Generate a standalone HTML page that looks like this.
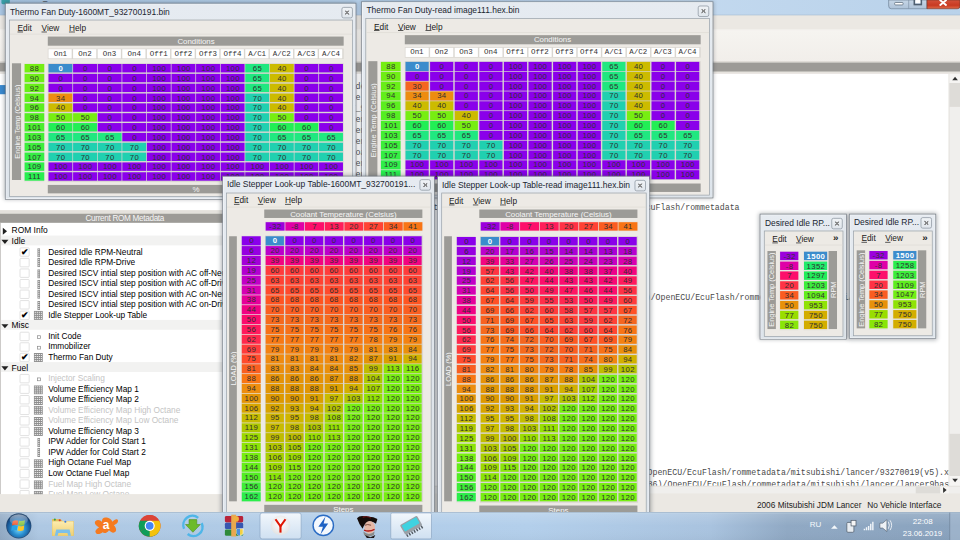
<!DOCTYPE html><html><head><meta charset="utf-8"><style>
*{margin:0;padding:0}
html,body{width:960px;height:540px;overflow:hidden;background:#ebe8e3}
body{font-family:"Liberation Sans",sans-serif}
#root{position:absolute;left:0;top:0;width:1366px;height:768px;transform:scale(0.702782,0.703125);transform-origin:0 0;overflow:hidden;background:#ebe8e3}
#root div{position:absolute}
#main{left:0;top:0;width:1366px;height:728px}
#tb{left:0;top:728px;width:1366px;height:40px}
.t{white-space:nowrap;font-family:"Liberation Sans",sans-serif}
.mono{font-family:"Liberation Mono",monospace}
.win{background:linear-gradient(#e6ebf1,#dde4eb);border:1px solid #747c85;box-sizing:border-box;box-shadow:0 0 6px 1px rgba(20,30,40,.33),inset 0 0 0 1px rgba(255,255,255,.65)}
.cont{background:#edeae5;border:1px solid #96a0aa;box-sizing:border-box;overflow:hidden}
.cbtn{border:1px solid #87919b;border-radius:3px;background:linear-gradient(#f0f3f6,#e0e6ec);box-sizing:border-box}
.cx{left:4px;top:4px;width:6px;height:6px;background:linear-gradient(45deg,transparent 38%,#707070 38% 62%,transparent 62%),linear-gradient(-45deg,transparent 38%,#707070 38% 62%,transparent 62%);opacity:.8}
.gbar{background:#9c9b97;color:#f6f6f6;font-size:11.2px;text-align:center;white-space:nowrap;overflow:hidden}
.vt{transform:translate(-50%,-50%) rotate(-90deg);white-space:nowrap;font-size:10.5px;color:#f6f6f6;line-height:12px}
.c{font-family:"Liberation Sans",sans-serif;font-size:11px;letter-spacing:0.5px;text-indent:0.5px;color:#303030;text-align:center;overflow:hidden}
.hd{font-family:"Liberation Mono",monospace;font-size:10.6px;letter-spacing:0;text-indent:0}
.hd{background:#fff;color:#333}
.sel{background:#3b8ccc;color:#fff;font-weight:bold}
</style></head><body><div id="root"><div id="main">
<div style="left:0.00px;top:0.00px;width:1366.00px;height:22.00px;background:linear-gradient(90deg,#a9c6e3 0%,#b6d0ea 40%,#c3d9ef 70%,#b9d2ea 100%);"></div>
<div class="t" style="left:21px;top:-10px;font-size:11px;color:#222">1600MT_932700191.bin - EcuFlash</div>
<div style="left:2.00px;top:-6.00px;width:12.00px;height:12.00px;background:#3aa0a8;border-radius:2px;"></div>
<svg width="110" height="14" viewBox="0 0 110 14" style="position:absolute;left:1258px;top:0">
<defs><linearGradient id="cbg" x1="0" x2="0" y1="0" y2="1"><stop offset="0" stop-color="#c6d6e6"/><stop offset="1" stop-color="#aec2d8"/></linearGradient>
<linearGradient id="cred" x1="0" x2="0" y1="0" y2="1"><stop offset="0" stop-color="#d4503a"/><stop offset="0.6" stop-color="#c83a22"/><stop offset="1" stop-color="#e06a48"/></linearGradient></defs>
<path d="M6.5 0 L6.5 8.5 Q6.5 12.5 10.5 12.5 L61 12.5 L61 0 Z" fill="url(#cbg)" stroke="#6f8296" stroke-width="1"/>
<line x1="35" y1="0" x2="35" y2="12.5" stroke="#7f92a6" stroke-width="1"/>
<path d="M61 0 L61 12.5 L104 12.5 Q108 12.5 108 8.5 L108 0 Z" fill="url(#cred)" stroke="#7a3a2c" stroke-width="1"/>
<rect x="15" y="3.5" width="12" height="3.5" rx="1.2" fill="#fff" stroke="#4f5f70" stroke-width="1"/>
<rect x="43" y="-1" width="10" height="7.5" fill="none" stroke="#4f5f70" stroke-width="2.2"/>
<rect x="44.5" y="0" width="7" height="4.5" fill="#fff"/>
<path d="M80 0.5 L88 7 M88 0.5 L80 7" stroke="#fff" stroke-width="2.8" stroke-linecap="round"/>
</svg>
<div style="left:0.00px;top:21.00px;width:1366.00px;height:1.00px;background:#9fb2c6;"></div>
<div style="left:0.00px;top:22.00px;width:1366.00px;height:20.00px;background:#ebe8e3;"></div>
<div style="left:0.00px;top:42.00px;width:1366.00px;height:46.00px;background:linear-gradient(#f6f4f0,#f1eeea);border-top:1px solid #f8f7f5;"></div>
<div style="left:0.00px;top:87.00px;width:1366.00px;height:2.00px;background:#dcd9d3;"></div>
<div style="left:0.00px;top:89.00px;width:355.00px;height:210.00px;background:#ffffff;"></div>
<div style="left:0.00px;top:89.00px;width:355.00px;height:13.00px;background:#9d9b97;"></div>
<div style="left:0.00px;top:102.00px;width:355.00px;height:3.00px;background:#e6e3de;"></div>
<div style="left:0.00px;top:120.60px;width:355.00px;height:13.80px;background:#3a8ad0;"></div>
<div style="left:0.00px;top:299.00px;width:355.00px;height:5.00px;background:#e4e1dc;"></div>
<div style="left:0.00px;top:304.00px;width:355.00px;height:13.00px;background:#9d9b97;color:#f6f6f6;font-size:11.6px;letter-spacing:-0.43px;line-height:13px;text-align:center;">Current ROM Metadata</div>
<div style="left:0.00px;top:317.00px;width:355.00px;height:386.00px;background:#ffffff;border-left:1px solid #b8b6b2;border-right:1px solid #b8b6b2;box-sizing:border-box;"></div>
<div style="left:0.00px;top:703.00px;width:355.00px;height:25.00px;background:#ebe8e3;"></div>
<div style="left:355.00px;top:89.00px;width:8.00px;height:639.00px;background:#ebe8e3;border-left:1px solid #c8c5c0;"></div>
<div style="left:322.00px;top:89.00px;width:1044.00px;height:13.00px;background:#9d9b97;"></div>
<div style="left:322.00px;top:102.00px;width:1044.00px;height:3.00px;background:#e6e3de;"></div>
<div style="left:322.00px;top:105.00px;width:1028.00px;height:586.00px;background:#ffffff;"></div>
<div style="left:1350.00px;top:105.00px;width:16.00px;height:586.00px;background:#f0efed;border-left:1px solid #e0ded9;box-sizing:border-box;"></div>
<div style="left:1351.00px;top:105.00px;width:15.00px;height:13.00px;background:#f6f5f3;"><div style="position:absolute;left:4px;top:4px;width:0;height:0;border-left:4px solid transparent;border-right:4px solid transparent;border-bottom:5px solid #303030"></div></div>
<div style="left:1351.00px;top:118.00px;width:15.00px;height:34.00px;background:#dedcd8;"></div>
<div style="left:1351.00px;top:617.00px;width:15.00px;height:60.00px;background:#dedcd8;"></div>
<div style="left:1351.00px;top:677.00px;width:15.00px;height:14.00px;background:#f6f5f3;"><div style="position:absolute;left:4px;top:4px;width:0;height:0;border-left:4px solid transparent;border-right:4px solid transparent;border-top:5px solid #303030"></div></div>
<div style="left:322.00px;top:691.00px;width:1044.00px;height:11.00px;background:#f0efed;border-top:1px solid #e0ded9;box-sizing:border-box;"></div>
<div style="left:1303.00px;top:692.00px;width:35.00px;height:10.00px;background:#dedcd8;"></div>
<div style="left:1338.00px;top:692.00px;width:12.00px;height:10.00px;background:#f6f5f3;"><div style="position:absolute;left:4px;top:1px;width:0;height:0;border-top:4px solid transparent;border-bottom:4px solid transparent;border-left:5px solid #303030"></div></div>
<div style="left:322.00px;top:702.00px;width:1044.00px;height:26.00px;background:#ebe8e3;"></div>
<div class="t" style="left:1077px;top:710.7px;font-size:11.8px;color:#222">2006 Mitsubishi JDM Lancer</div>
<div class="t" style="left:1234px;top:710.7px;font-size:11.8px;color:#222">No Vehicle Interface</div>
</div>
<div style="left:322px;top:105px;width:1028px;height:586px;overflow:hidden">
<div class="t mono" style="left:8.12px;top:-5.57px;font-size:11.725px;line-height:16px;color:#4a4a4a;white-space:pre">Ready.</div>
<div class="t mono" style="left:8.12px;top:10.16px;font-size:11.725px;line-height:16px;color:#4a4a4a;white-space:pre">loading ROM metadata - 1 definition</div>
<div class="t mono" style="left:8.12px;top:25.89px;font-size:11.725px;line-height:16px;color:#4a4a4a;white-space:pre">Idle Stepper Look-up Table: 1 C</div>
<div class="t mono" style="left:8.12px;top:41.62px;font-size:11.725px;line-height:16px;color:#4a4a4a;white-space:pre">Conditions loaded: 1600MT_932700191</div>
<div class="t mono" style="left:8.12px;top:57.35px;font-size:11.725px;line-height:16px;color:#4a4a4a;white-space:pre">C:/Program Files (x86)/OpenECU/EcuFlash/rommetadata/mitsubishi/lancer/93270019.xml</div>
<div class="t mono" style="left:8.12px;top:73.08px;font-size:11.725px;line-height:16px;color:#4a4a4a;white-space:pre">C:/Program Files (x86)/OpenECU/EcuFlash/rommetadata/mitsubishi/lancer/9327.xml</div>
<div class="t mono" style="left:8.12px;top:88.81px;font-size:11.725px;line-height:16px;color:#4a4a4a;white-space:pre">C:/Program Files (x86)/OpenECU/EcuFlash/rommetadata/mitsubishi/lancer/lancer9base.xml</div>
<div class="t mono" style="left:8.12px;top:104.54px;font-size:11.725px;line-height:16px;color:#4a4a4a;white-space:pre">E:/1600MT_932700191.bin loaded</div>
<div class="t mono" style="left:8.12px;top:120.27px;font-size:11.725px;line-height:16px;color:#4a4a4a;white-space:pre">C:/Program Files (x86)/OpenECU/EcuFlash/rommetadata/mitsubishi/evo/evo7base.xml</div>
<div class="t mono" style="left:8.12px;top:136.00px;font-size:11.725px;line-height:16px;color:#4a4a4a;white-space:pre">C:/Program Files (x86)/OpenECU/EcuFlash/rommetadata/mitsubishi/lancer/93270019(v5).xml</div>
<div class="t mono" style="left:8.12px;top:151.72px;font-size:11.725px;line-height:16px;color:#4a4a4a;white-space:pre">Calibration checksum OK</div>
<div class="t mono" style="left:8.12px;top:167.45px;font-size:11.725px;line-height:16px;color:#4a4a4a;white-space:pre">Loading definitions from C:/Program Files (x86)/OpenECU/EcuFlash/rommetadata</div>
<div class="t mono" style="left:195.86px;top:182.90px;font-size:11.725px;line-height:16px;color:#4a4a4a;white-space:pre">Loading definitions from C:/Program Files (x86)/OpenECU/EcuFlash/rommetadata</div>
<div class="t mono" style="left:449.12px;top:310.19px;font-size:11.725px;line-height:16px;color:#4a4a4a;white-space:pre">C:/Program Files (x86)/OpenECU/EcuFlash/rommetadata/mitsubishi/lancer/9327.xml</div>
<div class="t mono" style="left:437.61px;top:560.22px;font-size:11.725px;line-height:16px;color:#4a4a4a;white-space:pre">C:/Program Files (x86)/OpenECU/EcuFlash/rommetadata/mitsubishi/lancer/93270019(v5).xml</div>
<div class="t mono" style="left:409.71px;top:575.86px;font-size:11.725px;line-height:16px;color:#4a4a4a;white-space:pre">loading C:/Program Files (x86)/OpenECU/EcuFlash/rommetadata/mitsubishi/lancer/lancer9base.xml</div>
</div>
<div style="position:absolute;left:1px;top:317px;width:353px;height:386px;overflow:hidden">
<div style="left:3px;top:7.00px;width:0;height:0;border-top:5px solid transparent;border-bottom:5px solid transparent;border-left:6px solid #202020"></div>
<div class="t" style="left:15.5px;top:3.00px;font-size:12px;line-height:16px;color:#000">ROM Info</div>
<div style="left:0;top:17.51px;width:353px;height:14px;background:#f2f2f1"></div>
<div style="left:1px;top:24.01px;width:0;height:0;border-left:5px solid transparent;border-right:5px solid transparent;border-top:6px solid #202020"></div>
<div class="t" style="left:15.5px;top:18.01px;font-size:12px;line-height:16px;color:#000">Idle</div>
<div style="left:27px;top:35.02px;width:13.5px;height:13px;border:1.5px solid #d6d6d6;border-radius:1.5px;background:#fff;box-sizing:border-box"></div>
<div class="t" style="left:29.5px;top:32.52px;font-size:12.5px;font-weight:bold;color:#000">&#10004;</div>
<div style="left:51.648px;top:35.711px;width:5px;height:13px"><svg width="4.5" height="13" viewBox="0 0 3 9" style="position:absolute;left:0;top:0"><rect width="3" height="9" fill="#8e8e8e"/><rect x="1" y="1" width="1" height="1" fill="#fff"/><rect x="1" y="3" width="1" height="1" fill="#fff"/><rect x="1" y="5" width="1" height="1" fill="#fff"/><rect x="1" y="7" width="1" height="1" fill="#fff"/></svg></div>
<div class="t" style="left:67.5px;top:33.02px;font-size:11.8px;line-height:16px;color:#000;white-space:nowrap">Desired Idle RPM-Neutral</div>
<div style="left:27px;top:50.03px;width:13.5px;height:13px;border:1.5px solid #d6d6d6;border-radius:1.5px;background:#fff;box-sizing:border-box"></div>
<div style="left:51.648px;top:49.933px;width:5px;height:13px"><svg width="4.5" height="13" viewBox="0 0 3 9" style="position:absolute;left:0;top:0"><rect width="3" height="9" fill="#8e8e8e"/><rect x="1" y="1" width="1" height="1" fill="#fff"/><rect x="1" y="3" width="1" height="1" fill="#fff"/><rect x="1" y="5" width="1" height="1" fill="#fff"/><rect x="1" y="7" width="1" height="1" fill="#fff"/></svg></div>
<div class="t" style="left:67.5px;top:48.03px;font-size:11.8px;line-height:16px;color:#000;white-space:nowrap">Desired Idle RPM-Drive</div>
<div style="left:27px;top:65.04px;width:13.5px;height:13px;border:1.5px solid #d6d6d6;border-radius:1.5px;background:#fff;box-sizing:border-box"></div>
<div style="left:51.648px;top:65.578px;width:5px;height:13px"><svg width="4.5" height="13" viewBox="0 0 3 9" style="position:absolute;left:0;top:0"><rect width="3" height="9" fill="#8e8e8e"/><rect x="1" y="1" width="1" height="1" fill="#fff"/><rect x="1" y="3" width="1" height="1" fill="#fff"/><rect x="1" y="5" width="1" height="1" fill="#fff"/><rect x="1" y="7" width="1" height="1" fill="#fff"/></svg></div>
<div class="t" style="left:67.5px;top:63.04px;font-size:11.8px;line-height:16px;color:#000;white-space:nowrap">Desired ISCV intial step position with AC off-Neutral</div>
<div style="left:27px;top:80.05px;width:13.5px;height:13px;border:1.5px solid #d6d6d6;border-radius:1.5px;background:#fff;box-sizing:border-box"></div>
<div style="left:51.648px;top:81.222px;width:5px;height:13px"><svg width="4.5" height="13" viewBox="0 0 3 9" style="position:absolute;left:0;top:0"><rect width="3" height="9" fill="#8e8e8e"/><rect x="1" y="1" width="1" height="1" fill="#fff"/><rect x="1" y="3" width="1" height="1" fill="#fff"/><rect x="1" y="5" width="1" height="1" fill="#fff"/><rect x="1" y="7" width="1" height="1" fill="#fff"/></svg></div>
<div class="t" style="left:67.5px;top:78.05px;font-size:11.8px;line-height:16px;color:#000;white-space:nowrap">Desired ISCV intial step position with AC off-Drive</div>
<div style="left:27px;top:95.06px;width:13.5px;height:13px;border:1.5px solid #d6d6d6;border-radius:1.5px;background:#fff;box-sizing:border-box"></div>
<div style="left:51.648px;top:95.444px;width:5px;height:13px"><svg width="4.5" height="13" viewBox="0 0 3 9" style="position:absolute;left:0;top:0"><rect width="3" height="9" fill="#8e8e8e"/><rect x="1" y="1" width="1" height="1" fill="#fff"/><rect x="1" y="3" width="1" height="1" fill="#fff"/><rect x="1" y="5" width="1" height="1" fill="#fff"/><rect x="1" y="7" width="1" height="1" fill="#fff"/></svg></div>
<div class="t" style="left:67.5px;top:93.06px;font-size:11.8px;line-height:16px;color:#000;white-space:nowrap">Desired ISCV intial step position with AC on-Neutral</div>
<div style="left:27px;top:110.07px;width:13.5px;height:13px;border:1.5px solid #d6d6d6;border-radius:1.5px;background:#fff;box-sizing:border-box"></div>
<div style="left:51.648px;top:111.089px;width:5px;height:13px"><svg width="4.5" height="13" viewBox="0 0 3 9" style="position:absolute;left:0;top:0"><rect width="3" height="9" fill="#8e8e8e"/><rect x="1" y="1" width="1" height="1" fill="#fff"/><rect x="1" y="3" width="1" height="1" fill="#fff"/><rect x="1" y="5" width="1" height="1" fill="#fff"/><rect x="1" y="7" width="1" height="1" fill="#fff"/></svg></div>
<div class="t" style="left:67.5px;top:108.07px;font-size:11.8px;line-height:16px;color:#000;white-space:nowrap">Desired ISCV intial step position with AC on-Drive</div>
<div style="left:27px;top:125.08px;width:13.5px;height:13px;border:1.5px solid #d6d6d6;border-radius:1.5px;background:#fff;box-sizing:border-box"></div>
<div class="t" style="left:29.5px;top:122.58px;font-size:12.5px;font-weight:bold;color:#000">&#10004;</div>
<div style="left:47.379px;top:125.311px;width:13px;height:13px"><svg width="13" height="13" viewBox="0 0 9 9" style="position:absolute;left:0;top:0"><rect width="9" height="9" fill="#8e8e8e"/><rect x="1" y="1" width="1" height="1" fill="#fff"/><rect x="3" y="1" width="1" height="1" fill="#fff"/><rect x="5" y="1" width="1" height="1" fill="#fff"/><rect x="7" y="1" width="1" height="1" fill="#fff"/><rect x="1" y="3" width="1" height="1" fill="#fff"/><rect x="3" y="3" width="1" height="1" fill="#fff"/><rect x="5" y="3" width="1" height="1" fill="#fff"/><rect x="7" y="3" width="1" height="1" fill="#fff"/><rect x="1" y="5" width="1" height="1" fill="#fff"/><rect x="3" y="5" width="1" height="1" fill="#fff"/><rect x="5" y="5" width="1" height="1" fill="#fff"/><rect x="7" y="5" width="1" height="1" fill="#fff"/><rect x="1" y="7" width="1" height="1" fill="#fff"/><rect x="3" y="7" width="1" height="1" fill="#fff"/><rect x="5" y="7" width="1" height="1" fill="#fff"/><rect x="7" y="7" width="1" height="1" fill="#fff"/></svg></div>
<div class="t" style="left:67.5px;top:123.08px;font-size:11.8px;line-height:16px;color:#000;white-space:nowrap">Idle Stepper Look-up Table</div>
<div style="left:0;top:137.59px;width:353px;height:14px;background:#f2f2f1"></div>
<div style="left:1px;top:144.09px;width:0;height:0;border-left:5px solid transparent;border-right:5px solid transparent;border-top:6px solid #202020"></div>
<div class="t" style="left:15.5px;top:138.09px;font-size:12px;line-height:16px;color:#000">Misc</div>
<div style="left:27px;top:155.10px;width:13.5px;height:13px;border:1.5px solid #d6d6d6;border-radius:1.5px;background:#fff;box-sizing:border-box"></div>
<div style="left:52px;top:159.60px;width:5px;height:5px;border:1px solid #8a8a8a;box-sizing:border-box"></div>
<div class="t" style="left:67.5px;top:153.10px;font-size:11.8px;line-height:16px;color:#000;white-space:nowrap">Init Code</div>
<div style="left:27px;top:170.11px;width:13.5px;height:13px;border:1.5px solid #d6d6d6;border-radius:1.5px;background:#fff;box-sizing:border-box"></div>
<div style="left:52px;top:174.61px;width:5px;height:5px;border:1px solid #8a8a8a;box-sizing:border-box"></div>
<div class="t" style="left:67.5px;top:168.11px;font-size:11.8px;line-height:16px;color:#000;white-space:nowrap">Immobilizer</div>
<div style="left:27px;top:185.12px;width:13.5px;height:13px;border:1.5px solid #d6d6d6;border-radius:1.5px;background:#fff;box-sizing:border-box"></div>
<div class="t" style="left:29.5px;top:182.62px;font-size:12.5px;font-weight:bold;color:#000">&#10004;</div>
<div style="left:47.379px;top:185.044px;width:13px;height:13px"><svg width="13" height="13" viewBox="0 0 9 9" style="position:absolute;left:0;top:0"><rect width="9" height="9" fill="#8e8e8e"/><rect x="1" y="1" width="1" height="1" fill="#fff"/><rect x="3" y="1" width="1" height="1" fill="#fff"/><rect x="5" y="1" width="1" height="1" fill="#fff"/><rect x="7" y="1" width="1" height="1" fill="#fff"/><rect x="1" y="3" width="1" height="1" fill="#fff"/><rect x="3" y="3" width="1" height="1" fill="#fff"/><rect x="5" y="3" width="1" height="1" fill="#fff"/><rect x="7" y="3" width="1" height="1" fill="#fff"/><rect x="1" y="5" width="1" height="1" fill="#fff"/><rect x="3" y="5" width="1" height="1" fill="#fff"/><rect x="5" y="5" width="1" height="1" fill="#fff"/><rect x="7" y="5" width="1" height="1" fill="#fff"/><rect x="1" y="7" width="1" height="1" fill="#fff"/><rect x="3" y="7" width="1" height="1" fill="#fff"/><rect x="5" y="7" width="1" height="1" fill="#fff"/><rect x="7" y="7" width="1" height="1" fill="#fff"/></svg></div>
<div class="t" style="left:67.5px;top:183.12px;font-size:11.8px;line-height:16px;color:#000;white-space:nowrap">Thermo Fan Duty</div>
<div style="left:0;top:197.63px;width:353px;height:14px;background:#f2f2f1"></div>
<div style="left:1px;top:204.13px;width:0;height:0;border-left:5px solid transparent;border-right:5px solid transparent;border-top:6px solid #202020"></div>
<div class="t" style="left:15.5px;top:198.13px;font-size:12px;line-height:16px;color:#000">Fuel</div>
<div style="left:27px;top:215.14px;width:13.5px;height:13px;border:1.5px solid #d6d6d6;border-radius:1.5px;background:#fff;box-sizing:border-box"></div>
<div style="left:52px;top:219.64px;width:5px;height:5px;border:1px solid #8a8a8a;box-sizing:border-box"></div>
<div class="t" style="left:67.5px;top:213.14px;font-size:11.8px;line-height:16px;color:#c4c4c4;white-space:nowrap">Injector Scaling</div>
<div style="left:27px;top:230.15px;width:13.5px;height:13px;border:1.5px solid #d6d6d6;border-radius:1.5px;background:#fff;box-sizing:border-box"></div>
<div style="left:47.379px;top:230.556px;width:13px;height:13px"><svg width="13" height="13" viewBox="0 0 9 9" style="position:absolute;left:0;top:0"><rect width="9" height="9" fill="#8e8e8e"/><rect x="1" y="1" width="1" height="1" fill="#fff"/><rect x="3" y="1" width="1" height="1" fill="#fff"/><rect x="5" y="1" width="1" height="1" fill="#fff"/><rect x="7" y="1" width="1" height="1" fill="#fff"/><rect x="1" y="3" width="1" height="1" fill="#fff"/><rect x="3" y="3" width="1" height="1" fill="#fff"/><rect x="5" y="3" width="1" height="1" fill="#fff"/><rect x="7" y="3" width="1" height="1" fill="#fff"/><rect x="1" y="5" width="1" height="1" fill="#fff"/><rect x="3" y="5" width="1" height="1" fill="#fff"/><rect x="5" y="5" width="1" height="1" fill="#fff"/><rect x="7" y="5" width="1" height="1" fill="#fff"/><rect x="1" y="7" width="1" height="1" fill="#fff"/><rect x="3" y="7" width="1" height="1" fill="#fff"/><rect x="5" y="7" width="1" height="1" fill="#fff"/><rect x="7" y="7" width="1" height="1" fill="#fff"/></svg></div>
<div class="t" style="left:67.5px;top:228.15px;font-size:11.8px;line-height:16px;color:#000;white-space:nowrap">Volume Efficiency Map 1</div>
<div style="left:27px;top:245.16px;width:13.5px;height:13px;border:1.5px solid #d6d6d6;border-radius:1.5px;background:#fff;box-sizing:border-box"></div>
<div style="left:47.379px;top:246.200px;width:13px;height:13px"><svg width="13" height="13" viewBox="0 0 9 9" style="position:absolute;left:0;top:0"><rect width="9" height="9" fill="#8e8e8e"/><rect x="1" y="1" width="1" height="1" fill="#fff"/><rect x="3" y="1" width="1" height="1" fill="#fff"/><rect x="5" y="1" width="1" height="1" fill="#fff"/><rect x="7" y="1" width="1" height="1" fill="#fff"/><rect x="1" y="3" width="1" height="1" fill="#fff"/><rect x="3" y="3" width="1" height="1" fill="#fff"/><rect x="5" y="3" width="1" height="1" fill="#fff"/><rect x="7" y="3" width="1" height="1" fill="#fff"/><rect x="1" y="5" width="1" height="1" fill="#fff"/><rect x="3" y="5" width="1" height="1" fill="#fff"/><rect x="5" y="5" width="1" height="1" fill="#fff"/><rect x="7" y="5" width="1" height="1" fill="#fff"/><rect x="1" y="7" width="1" height="1" fill="#fff"/><rect x="3" y="7" width="1" height="1" fill="#fff"/><rect x="5" y="7" width="1" height="1" fill="#fff"/><rect x="7" y="7" width="1" height="1" fill="#fff"/></svg></div>
<div class="t" style="left:67.5px;top:243.16px;font-size:11.8px;line-height:16px;color:#000;white-space:nowrap">Volume Efficiency Map 2</div>
<div style="left:27px;top:260.17px;width:13.5px;height:13px;border:1.5px solid #d6d6d6;border-radius:1.5px;background:#fff;box-sizing:border-box"></div>
<div style="left:47.379px;top:260.422px;width:13px;height:13px"><svg width="13" height="13" viewBox="0 0 9 9" style="position:absolute;left:0;top:0"><rect width="9" height="9" fill="#8e8e8e"/><rect x="1" y="1" width="1" height="1" fill="#fff"/><rect x="3" y="1" width="1" height="1" fill="#fff"/><rect x="5" y="1" width="1" height="1" fill="#fff"/><rect x="7" y="1" width="1" height="1" fill="#fff"/><rect x="1" y="3" width="1" height="1" fill="#fff"/><rect x="3" y="3" width="1" height="1" fill="#fff"/><rect x="5" y="3" width="1" height="1" fill="#fff"/><rect x="7" y="3" width="1" height="1" fill="#fff"/><rect x="1" y="5" width="1" height="1" fill="#fff"/><rect x="3" y="5" width="1" height="1" fill="#fff"/><rect x="5" y="5" width="1" height="1" fill="#fff"/><rect x="7" y="5" width="1" height="1" fill="#fff"/><rect x="1" y="7" width="1" height="1" fill="#fff"/><rect x="3" y="7" width="1" height="1" fill="#fff"/><rect x="5" y="7" width="1" height="1" fill="#fff"/><rect x="7" y="7" width="1" height="1" fill="#fff"/></svg></div>
<div class="t" style="left:67.5px;top:258.17px;font-size:11.8px;line-height:16px;color:#c4c4c4;white-space:nowrap">Volume Efficiency Map High Octane</div>
<div style="left:27px;top:275.18px;width:13.5px;height:13px;border:1.5px solid #d6d6d6;border-radius:1.5px;background:#fff;box-sizing:border-box"></div>
<div style="left:47.379px;top:276.067px;width:13px;height:13px"><svg width="13" height="13" viewBox="0 0 9 9" style="position:absolute;left:0;top:0"><rect width="9" height="9" fill="#8e8e8e"/><rect x="1" y="1" width="1" height="1" fill="#fff"/><rect x="3" y="1" width="1" height="1" fill="#fff"/><rect x="5" y="1" width="1" height="1" fill="#fff"/><rect x="7" y="1" width="1" height="1" fill="#fff"/><rect x="1" y="3" width="1" height="1" fill="#fff"/><rect x="3" y="3" width="1" height="1" fill="#fff"/><rect x="5" y="3" width="1" height="1" fill="#fff"/><rect x="7" y="3" width="1" height="1" fill="#fff"/><rect x="1" y="5" width="1" height="1" fill="#fff"/><rect x="3" y="5" width="1" height="1" fill="#fff"/><rect x="5" y="5" width="1" height="1" fill="#fff"/><rect x="7" y="5" width="1" height="1" fill="#fff"/><rect x="1" y="7" width="1" height="1" fill="#fff"/><rect x="3" y="7" width="1" height="1" fill="#fff"/><rect x="5" y="7" width="1" height="1" fill="#fff"/><rect x="7" y="7" width="1" height="1" fill="#fff"/></svg></div>
<div class="t" style="left:67.5px;top:273.18px;font-size:11.8px;line-height:16px;color:#c4c4c4;white-space:nowrap">Volume Efficiency Map Low Octane</div>
<div style="left:27px;top:290.19px;width:13.5px;height:13px;border:1.5px solid #d6d6d6;border-radius:1.5px;background:#fff;box-sizing:border-box"></div>
<div style="left:47.379px;top:290.289px;width:13px;height:13px"><svg width="13" height="13" viewBox="0 0 9 9" style="position:absolute;left:0;top:0"><rect width="9" height="9" fill="#8e8e8e"/><rect x="1" y="1" width="1" height="1" fill="#fff"/><rect x="3" y="1" width="1" height="1" fill="#fff"/><rect x="5" y="1" width="1" height="1" fill="#fff"/><rect x="7" y="1" width="1" height="1" fill="#fff"/><rect x="1" y="3" width="1" height="1" fill="#fff"/><rect x="3" y="3" width="1" height="1" fill="#fff"/><rect x="5" y="3" width="1" height="1" fill="#fff"/><rect x="7" y="3" width="1" height="1" fill="#fff"/><rect x="1" y="5" width="1" height="1" fill="#fff"/><rect x="3" y="5" width="1" height="1" fill="#fff"/><rect x="5" y="5" width="1" height="1" fill="#fff"/><rect x="7" y="5" width="1" height="1" fill="#fff"/><rect x="1" y="7" width="1" height="1" fill="#fff"/><rect x="3" y="7" width="1" height="1" fill="#fff"/><rect x="5" y="7" width="1" height="1" fill="#fff"/><rect x="7" y="7" width="1" height="1" fill="#fff"/></svg></div>
<div class="t" style="left:67.5px;top:288.19px;font-size:11.8px;line-height:16px;color:#000;white-space:nowrap">Volume Efficiency Map 3</div>
<div style="left:27px;top:305.20px;width:13.5px;height:13px;border:1.5px solid #d6d6d6;border-radius:1.5px;background:#fff;box-sizing:border-box"></div>
<div style="left:51.648px;top:305.933px;width:5px;height:13px"><svg width="4.5" height="13" viewBox="0 0 3 9" style="position:absolute;left:0;top:0"><rect width="3" height="9" fill="#8e8e8e"/><rect x="1" y="1" width="1" height="1" fill="#fff"/><rect x="1" y="3" width="1" height="1" fill="#fff"/><rect x="1" y="5" width="1" height="1" fill="#fff"/><rect x="1" y="7" width="1" height="1" fill="#fff"/></svg></div>
<div class="t" style="left:67.5px;top:303.20px;font-size:11.8px;line-height:16px;color:#000;white-space:nowrap">IPW Adder for Cold Start 1</div>
<div style="left:27px;top:320.21px;width:13.5px;height:13px;border:1.5px solid #d6d6d6;border-radius:1.5px;background:#fff;box-sizing:border-box"></div>
<div style="left:51.648px;top:320.156px;width:5px;height:13px"><svg width="4.5" height="13" viewBox="0 0 3 9" style="position:absolute;left:0;top:0"><rect width="3" height="9" fill="#8e8e8e"/><rect x="1" y="1" width="1" height="1" fill="#fff"/><rect x="1" y="3" width="1" height="1" fill="#fff"/><rect x="1" y="5" width="1" height="1" fill="#fff"/><rect x="1" y="7" width="1" height="1" fill="#fff"/></svg></div>
<div class="t" style="left:67.5px;top:318.21px;font-size:11.8px;line-height:16px;color:#000;white-space:nowrap">IPW Adder for Cold Start 2</div>
<div style="left:27px;top:335.22px;width:13.5px;height:13px;border:1.5px solid #d6d6d6;border-radius:1.5px;background:#fff;box-sizing:border-box"></div>
<div style="left:47.379px;top:335.800px;width:13px;height:13px"><svg width="13" height="13" viewBox="0 0 9 9" style="position:absolute;left:0;top:0"><rect width="9" height="9" fill="#8e8e8e"/><rect x="1" y="1" width="1" height="1" fill="#fff"/><rect x="3" y="1" width="1" height="1" fill="#fff"/><rect x="5" y="1" width="1" height="1" fill="#fff"/><rect x="7" y="1" width="1" height="1" fill="#fff"/><rect x="1" y="3" width="1" height="1" fill="#fff"/><rect x="3" y="3" width="1" height="1" fill="#fff"/><rect x="5" y="3" width="1" height="1" fill="#fff"/><rect x="7" y="3" width="1" height="1" fill="#fff"/><rect x="1" y="5" width="1" height="1" fill="#fff"/><rect x="3" y="5" width="1" height="1" fill="#fff"/><rect x="5" y="5" width="1" height="1" fill="#fff"/><rect x="7" y="5" width="1" height="1" fill="#fff"/><rect x="1" y="7" width="1" height="1" fill="#fff"/><rect x="3" y="7" width="1" height="1" fill="#fff"/><rect x="5" y="7" width="1" height="1" fill="#fff"/><rect x="7" y="7" width="1" height="1" fill="#fff"/></svg></div>
<div class="t" style="left:67.5px;top:333.22px;font-size:11.8px;line-height:16px;color:#000;white-space:nowrap">High Octane Fuel Map</div>
<div style="left:27px;top:350.23px;width:13.5px;height:13px;border:1.5px solid #d6d6d6;border-radius:1.5px;background:#fff;box-sizing:border-box"></div>
<div style="left:47.379px;top:350.022px;width:13px;height:13px"><svg width="13" height="13" viewBox="0 0 9 9" style="position:absolute;left:0;top:0"><rect width="9" height="9" fill="#8e8e8e"/><rect x="1" y="1" width="1" height="1" fill="#fff"/><rect x="3" y="1" width="1" height="1" fill="#fff"/><rect x="5" y="1" width="1" height="1" fill="#fff"/><rect x="7" y="1" width="1" height="1" fill="#fff"/><rect x="1" y="3" width="1" height="1" fill="#fff"/><rect x="3" y="3" width="1" height="1" fill="#fff"/><rect x="5" y="3" width="1" height="1" fill="#fff"/><rect x="7" y="3" width="1" height="1" fill="#fff"/><rect x="1" y="5" width="1" height="1" fill="#fff"/><rect x="3" y="5" width="1" height="1" fill="#fff"/><rect x="5" y="5" width="1" height="1" fill="#fff"/><rect x="7" y="5" width="1" height="1" fill="#fff"/><rect x="1" y="7" width="1" height="1" fill="#fff"/><rect x="3" y="7" width="1" height="1" fill="#fff"/><rect x="5" y="7" width="1" height="1" fill="#fff"/><rect x="7" y="7" width="1" height="1" fill="#fff"/></svg></div>
<div class="t" style="left:67.5px;top:348.23px;font-size:11.8px;line-height:16px;color:#000;white-space:nowrap">Low Octane Fuel Map</div>
<div style="left:27px;top:365.24px;width:13.5px;height:13px;border:1.5px solid #d6d6d6;border-radius:1.5px;background:#fff;box-sizing:border-box"></div>
<div style="left:47.379px;top:365.667px;width:13px;height:13px"><svg width="13" height="13" viewBox="0 0 9 9" style="position:absolute;left:0;top:0"><rect width="9" height="9" fill="#8e8e8e"/><rect x="1" y="1" width="1" height="1" fill="#fff"/><rect x="3" y="1" width="1" height="1" fill="#fff"/><rect x="5" y="1" width="1" height="1" fill="#fff"/><rect x="7" y="1" width="1" height="1" fill="#fff"/><rect x="1" y="3" width="1" height="1" fill="#fff"/><rect x="3" y="3" width="1" height="1" fill="#fff"/><rect x="5" y="3" width="1" height="1" fill="#fff"/><rect x="7" y="3" width="1" height="1" fill="#fff"/><rect x="1" y="5" width="1" height="1" fill="#fff"/><rect x="3" y="5" width="1" height="1" fill="#fff"/><rect x="5" y="5" width="1" height="1" fill="#fff"/><rect x="7" y="5" width="1" height="1" fill="#fff"/><rect x="1" y="7" width="1" height="1" fill="#fff"/><rect x="3" y="7" width="1" height="1" fill="#fff"/><rect x="5" y="7" width="1" height="1" fill="#fff"/><rect x="7" y="7" width="1" height="1" fill="#fff"/></svg></div>
<div class="t" style="left:67.5px;top:363.24px;font-size:11.8px;line-height:16px;color:#c4c4c4;white-space:nowrap">Fuel Map High Octane</div>
<div style="left:27px;top:380.25px;width:13.5px;height:13px;border:1.5px solid #d6d6d6;border-radius:1.5px;background:#fff;box-sizing:border-box"></div>
<div style="left:47.379px;top:381.311px;width:13px;height:13px"><svg width="13" height="13" viewBox="0 0 9 9" style="position:absolute;left:0;top:0"><rect width="9" height="9" fill="#8e8e8e"/><rect x="1" y="1" width="1" height="1" fill="#fff"/><rect x="3" y="1" width="1" height="1" fill="#fff"/><rect x="5" y="1" width="1" height="1" fill="#fff"/><rect x="7" y="1" width="1" height="1" fill="#fff"/><rect x="1" y="3" width="1" height="1" fill="#fff"/><rect x="3" y="3" width="1" height="1" fill="#fff"/><rect x="5" y="3" width="1" height="1" fill="#fff"/><rect x="7" y="3" width="1" height="1" fill="#fff"/><rect x="1" y="5" width="1" height="1" fill="#fff"/><rect x="3" y="5" width="1" height="1" fill="#fff"/><rect x="5" y="5" width="1" height="1" fill="#fff"/><rect x="7" y="5" width="1" height="1" fill="#fff"/><rect x="1" y="7" width="1" height="1" fill="#fff"/><rect x="3" y="7" width="1" height="1" fill="#fff"/><rect x="5" y="7" width="1" height="1" fill="#fff"/><rect x="7" y="7" width="1" height="1" fill="#fff"/></svg></div>
<div class="t" style="left:67.5px;top:378.25px;font-size:11.8px;line-height:16px;color:#c4c4c4;white-space:nowrap">Fuel Map Low Octane</div>
</div>
<div class="win" style="left:7.11px;top:4.27px;width:500.20px;height:280.10px;">
<div class="t" style="left:6px;top:3.6px;font-size:12px;line-height:16px;color:#1b2530;white-space:nowrap">Thermo Fan Duty-1600MT_932700191.bin</div>
<div class="cbtn" style="left:477.40px;top:4.5px;width:16px;height:16px"><div class="cx"></div></div>
<div class="cont" style="left:5px;top:23px;width:489.20px;height:252.10px">
<div class="t" style="left:10.80px;top:2.5px;font-size:11.8px;line-height:16px;color:#1a1a1a"><u>E</u>dit</div>
<div class="t" style="left:45.00px;top:2.5px;font-size:11.8px;line-height:16px;color:#1a1a1a"><u>V</u>iew</div>
<div class="t" style="left:84.00px;top:2.5px;font-size:11.8px;line-height:16px;color:#1a1a1a"><u>H</u>elp</div>
<div style="left:0;top:19px;width:489.20px;height:1px;background:#dedbd5"></div>
<div class="gbar" style="left:54.20px;top:23.20px;width:421.20px;height:12.40px;line-height:12.40px">Conditions</div>
<div style="left:54.30px;top:40.00px;width:421.00px;height:15px;background:#d9d6d0"></div>
<div class="c hd" style="left:55.30px;top:41.00px;width:33px;height:13px;line-height:13px">On1</div>
<div class="c hd" style="left:90.30px;top:41.00px;width:33px;height:13px;line-height:13px">On2</div>
<div class="c hd" style="left:125.30px;top:41.00px;width:33px;height:13px;line-height:13px">On3</div>
<div class="c hd" style="left:160.30px;top:41.00px;width:33px;height:13px;line-height:13px">On4</div>
<div class="c hd" style="left:195.30px;top:41.00px;width:33px;height:13px;line-height:13px">Off1</div>
<div class="c hd" style="left:230.30px;top:41.00px;width:33px;height:13px;line-height:13px">Off2</div>
<div class="c hd" style="left:265.30px;top:41.00px;width:33px;height:13px;line-height:13px">Off3</div>
<div class="c hd" style="left:300.30px;top:41.00px;width:33px;height:13px;line-height:13px">Off4</div>
<div class="c hd" style="left:335.30px;top:41.00px;width:33px;height:13px;line-height:13px">A/C1</div>
<div class="c hd" style="left:370.30px;top:41.00px;width:33px;height:13px;line-height:13px">A/C2</div>
<div class="c hd" style="left:405.30px;top:41.00px;width:33px;height:13px;line-height:13px">A/C3</div>
<div class="c hd" style="left:440.30px;top:41.00px;width:33px;height:13px;line-height:13px">A/C4</div>
<div class="gbar" style="left:3.00px;top:60.30px;width:12.80px;height:166.40px"><div class="vt" style="left:6.40px;top:83.20px">Engine Temp (Celsius)</div></div>
<div style="left:20.00px;top:60.30px;width:29px;height:169.00px;background:#e6e3de"></div>
<div style="left:54.30px;top:60.30px;width:421.00px;height:169.00px;background:#dad6d2"></div>
<div class="c" style="left:21.00px;top:61.30px;width:27.50px;height:12.50px;line-height:12.50px;background:#75ee12">88</div>
<div class="c sel" style="left:55.30px;top:61.30px;width:33.50px;height:12.50px;line-height:12.50px">0</div>
<div class="c" style="left:90.30px;top:61.30px;width:33.50px;height:12.50px;line-height:12.50px;background:#8a00ea">0</div>
<div class="c" style="left:125.30px;top:61.30px;width:33.50px;height:12.50px;line-height:12.50px;background:#8a00ea">0</div>
<div class="c" style="left:160.30px;top:61.30px;width:33.50px;height:12.50px;line-height:12.50px;background:#8a00ea">0</div>
<div class="c" style="left:195.30px;top:61.30px;width:33.50px;height:12.50px;line-height:12.50px;background:#8a00ea">100</div>
<div class="c" style="left:230.30px;top:61.30px;width:33.50px;height:12.50px;line-height:12.50px;background:#8a00ea">100</div>
<div class="c" style="left:265.30px;top:61.30px;width:33.50px;height:12.50px;line-height:12.50px;background:#8a00ea">100</div>
<div class="c" style="left:300.30px;top:61.30px;width:33.50px;height:12.50px;line-height:12.50px;background:#8a00ea">100</div>
<div class="c" style="left:335.30px;top:61.30px;width:33.50px;height:12.50px;line-height:12.50px;background:#20e880">65</div>
<div class="c" style="left:370.30px;top:61.30px;width:33.50px;height:12.50px;line-height:12.50px;background:#ccbb00">40</div>
<div class="c" style="left:405.30px;top:61.30px;width:33.50px;height:12.50px;line-height:12.50px;background:#8a00ea">0</div>
<div class="c" style="left:440.30px;top:61.30px;width:33.50px;height:12.50px;line-height:12.50px;background:#8a00ea">0</div>
<div class="c" style="left:21.00px;top:75.30px;width:27.50px;height:12.50px;line-height:12.50px;background:#6fee15">90</div>
<div class="c" style="left:55.30px;top:75.30px;width:33.50px;height:12.50px;line-height:12.50px;background:#8a00ea">0</div>
<div class="c" style="left:90.30px;top:75.30px;width:33.50px;height:12.50px;line-height:12.50px;background:#8a00ea">0</div>
<div class="c" style="left:125.30px;top:75.30px;width:33.50px;height:12.50px;line-height:12.50px;background:#8a00ea">0</div>
<div class="c" style="left:160.30px;top:75.30px;width:33.50px;height:12.50px;line-height:12.50px;background:#8a00ea">0</div>
<div class="c" style="left:195.30px;top:75.30px;width:33.50px;height:12.50px;line-height:12.50px;background:#8a00ea">100</div>
<div class="c" style="left:230.30px;top:75.30px;width:33.50px;height:12.50px;line-height:12.50px;background:#8a00ea">100</div>
<div class="c" style="left:265.30px;top:75.30px;width:33.50px;height:12.50px;line-height:12.50px;background:#8a00ea">100</div>
<div class="c" style="left:300.30px;top:75.30px;width:33.50px;height:12.50px;line-height:12.50px;background:#8a00ea">100</div>
<div class="c" style="left:335.30px;top:75.30px;width:33.50px;height:12.50px;line-height:12.50px;background:#20e880">65</div>
<div class="c" style="left:370.30px;top:75.30px;width:33.50px;height:12.50px;line-height:12.50px;background:#ccbb00">40</div>
<div class="c" style="left:405.30px;top:75.30px;width:33.50px;height:12.50px;line-height:12.50px;background:#8a00ea">0</div>
<div class="c" style="left:440.30px;top:75.30px;width:33.50px;height:12.50px;line-height:12.50px;background:#8a00ea">0</div>
<div class="c" style="left:21.00px;top:89.30px;width:27.50px;height:12.50px;line-height:12.50px;background:#69ee18">92</div>
<div class="c" style="left:55.30px;top:89.30px;width:33.50px;height:12.50px;line-height:12.50px;background:#8a00ea">0</div>
<div class="c" style="left:90.30px;top:89.30px;width:33.50px;height:12.50px;line-height:12.50px;background:#8a00ea">0</div>
<div class="c" style="left:125.30px;top:89.30px;width:33.50px;height:12.50px;line-height:12.50px;background:#8a00ea">0</div>
<div class="c" style="left:160.30px;top:89.30px;width:33.50px;height:12.50px;line-height:12.50px;background:#8a00ea">0</div>
<div class="c" style="left:195.30px;top:89.30px;width:33.50px;height:12.50px;line-height:12.50px;background:#8a00ea">100</div>
<div class="c" style="left:230.30px;top:89.30px;width:33.50px;height:12.50px;line-height:12.50px;background:#8a00ea">100</div>
<div class="c" style="left:265.30px;top:89.30px;width:33.50px;height:12.50px;line-height:12.50px;background:#8a00ea">100</div>
<div class="c" style="left:300.30px;top:89.30px;width:33.50px;height:12.50px;line-height:12.50px;background:#8a00ea">100</div>
<div class="c" style="left:335.30px;top:89.30px;width:33.50px;height:12.50px;line-height:12.50px;background:#20e880">65</div>
<div class="c" style="left:370.30px;top:89.30px;width:33.50px;height:12.50px;line-height:12.50px;background:#ccbb00">40</div>
<div class="c" style="left:405.30px;top:89.30px;width:33.50px;height:12.50px;line-height:12.50px;background:#8a00ea">0</div>
<div class="c" style="left:440.30px;top:89.30px;width:33.50px;height:12.50px;line-height:12.50px;background:#8a00ea">0</div>
<div class="c" style="left:21.00px;top:103.30px;width:27.50px;height:12.50px;line-height:12.50px;background:#62ee1b">94</div>
<div class="c" style="left:55.30px;top:103.30px;width:33.50px;height:12.50px;line-height:12.50px;background:#ed8c10">34</div>
<div class="c" style="left:90.30px;top:103.30px;width:33.50px;height:12.50px;line-height:12.50px;background:#8a00ea">0</div>
<div class="c" style="left:125.30px;top:103.30px;width:33.50px;height:12.50px;line-height:12.50px;background:#8a00ea">0</div>
<div class="c" style="left:160.30px;top:103.30px;width:33.50px;height:12.50px;line-height:12.50px;background:#8a00ea">0</div>
<div class="c" style="left:195.30px;top:103.30px;width:33.50px;height:12.50px;line-height:12.50px;background:#8a00ea">100</div>
<div class="c" style="left:230.30px;top:103.30px;width:33.50px;height:12.50px;line-height:12.50px;background:#8a00ea">100</div>
<div class="c" style="left:265.30px;top:103.30px;width:33.50px;height:12.50px;line-height:12.50px;background:#8a00ea">100</div>
<div class="c" style="left:300.30px;top:103.30px;width:33.50px;height:12.50px;line-height:12.50px;background:#8a00ea">100</div>
<div class="c" style="left:335.30px;top:103.30px;width:33.50px;height:12.50px;line-height:12.50px;background:#20d0b0">70</div>
<div class="c" style="left:370.30px;top:103.30px;width:33.50px;height:12.50px;line-height:12.50px;background:#ccbb00">40</div>
<div class="c" style="left:405.30px;top:103.30px;width:33.50px;height:12.50px;line-height:12.50px;background:#8a00ea">0</div>
<div class="c" style="left:440.30px;top:103.30px;width:33.50px;height:12.50px;line-height:12.50px;background:#8a00ea">0</div>
<div class="c" style="left:21.00px;top:117.30px;width:27.50px;height:12.50px;line-height:12.50px;background:#5cee1f">96</div>
<div class="c" style="left:55.30px;top:117.30px;width:33.50px;height:12.50px;line-height:12.50px;background:#ccbb00">40</div>
<div class="c" style="left:90.30px;top:117.30px;width:33.50px;height:12.50px;line-height:12.50px;background:#8a00ea">0</div>
<div class="c" style="left:125.30px;top:117.30px;width:33.50px;height:12.50px;line-height:12.50px;background:#8a00ea">0</div>
<div class="c" style="left:160.30px;top:117.30px;width:33.50px;height:12.50px;line-height:12.50px;background:#8a00ea">0</div>
<div class="c" style="left:195.30px;top:117.30px;width:33.50px;height:12.50px;line-height:12.50px;background:#8a00ea">100</div>
<div class="c" style="left:230.30px;top:117.30px;width:33.50px;height:12.50px;line-height:12.50px;background:#8a00ea">100</div>
<div class="c" style="left:265.30px;top:117.30px;width:33.50px;height:12.50px;line-height:12.50px;background:#8a00ea">100</div>
<div class="c" style="left:300.30px;top:117.30px;width:33.50px;height:12.50px;line-height:12.50px;background:#8a00ea">100</div>
<div class="c" style="left:335.30px;top:117.30px;width:33.50px;height:12.50px;line-height:12.50px;background:#20d0b0">70</div>
<div class="c" style="left:370.30px;top:117.30px;width:33.50px;height:12.50px;line-height:12.50px;background:#ccbb00">40</div>
<div class="c" style="left:405.30px;top:117.30px;width:33.50px;height:12.50px;line-height:12.50px;background:#8a00ea">0</div>
<div class="c" style="left:440.30px;top:117.30px;width:33.50px;height:12.50px;line-height:12.50px;background:#8a00ea">0</div>
<div class="c" style="left:21.00px;top:131.30px;width:27.50px;height:12.50px;line-height:12.50px;background:#55ee22">98</div>
<div class="c" style="left:55.30px;top:131.30px;width:33.50px;height:12.50px;line-height:12.50px;background:#77ee11">50</div>
<div class="c" style="left:90.30px;top:131.30px;width:33.50px;height:12.50px;line-height:12.50px;background:#77ee11">50</div>
<div class="c" style="left:125.30px;top:131.30px;width:33.50px;height:12.50px;line-height:12.50px;background:#8a00ea">0</div>
<div class="c" style="left:160.30px;top:131.30px;width:33.50px;height:12.50px;line-height:12.50px;background:#8a00ea">0</div>
<div class="c" style="left:195.30px;top:131.30px;width:33.50px;height:12.50px;line-height:12.50px;background:#8a00ea">100</div>
<div class="c" style="left:230.30px;top:131.30px;width:33.50px;height:12.50px;line-height:12.50px;background:#8a00ea">100</div>
<div class="c" style="left:265.30px;top:131.30px;width:33.50px;height:12.50px;line-height:12.50px;background:#8a00ea">100</div>
<div class="c" style="left:300.30px;top:131.30px;width:33.50px;height:12.50px;line-height:12.50px;background:#8a00ea">100</div>
<div class="c" style="left:335.30px;top:131.30px;width:33.50px;height:12.50px;line-height:12.50px;background:#20d0b0">70</div>
<div class="c" style="left:370.30px;top:131.30px;width:33.50px;height:12.50px;line-height:12.50px;background:#77ee11">50</div>
<div class="c" style="left:405.30px;top:131.30px;width:33.50px;height:12.50px;line-height:12.50px;background:#8a00ea">0</div>
<div class="c" style="left:440.30px;top:131.30px;width:33.50px;height:12.50px;line-height:12.50px;background:#8a00ea">0</div>
<div class="c" style="left:21.00px;top:145.30px;width:27.50px;height:12.50px;line-height:12.50px;background:#4aee2d">101</div>
<div class="c" style="left:55.30px;top:145.30px;width:33.50px;height:12.50px;line-height:12.50px;background:#22ee55">60</div>
<div class="c" style="left:90.30px;top:145.30px;width:33.50px;height:12.50px;line-height:12.50px;background:#22ee55">60</div>
<div class="c" style="left:125.30px;top:145.30px;width:33.50px;height:12.50px;line-height:12.50px;background:#8a00ea">0</div>
<div class="c" style="left:160.30px;top:145.30px;width:33.50px;height:12.50px;line-height:12.50px;background:#8a00ea">0</div>
<div class="c" style="left:195.30px;top:145.30px;width:33.50px;height:12.50px;line-height:12.50px;background:#8a00ea">100</div>
<div class="c" style="left:230.30px;top:145.30px;width:33.50px;height:12.50px;line-height:12.50px;background:#8a00ea">100</div>
<div class="c" style="left:265.30px;top:145.30px;width:33.50px;height:12.50px;line-height:12.50px;background:#8a00ea">100</div>
<div class="c" style="left:300.30px;top:145.30px;width:33.50px;height:12.50px;line-height:12.50px;background:#8a00ea">100</div>
<div class="c" style="left:335.30px;top:145.30px;width:33.50px;height:12.50px;line-height:12.50px;background:#20d0b0">70</div>
<div class="c" style="left:370.30px;top:145.30px;width:33.50px;height:12.50px;line-height:12.50px;background:#22ee55">60</div>
<div class="c" style="left:405.30px;top:145.30px;width:33.50px;height:12.50px;line-height:12.50px;background:#22ee55">60</div>
<div class="c" style="left:440.30px;top:145.30px;width:33.50px;height:12.50px;line-height:12.50px;background:#8a00ea">0</div>
<div class="c" style="left:21.00px;top:159.30px;width:27.50px;height:12.50px;line-height:12.50px;background:#43ee34">103</div>
<div class="c" style="left:55.30px;top:159.30px;width:33.50px;height:12.50px;line-height:12.50px;background:#20e880">65</div>
<div class="c" style="left:90.30px;top:159.30px;width:33.50px;height:12.50px;line-height:12.50px;background:#20e880">65</div>
<div class="c" style="left:125.30px;top:159.30px;width:33.50px;height:12.50px;line-height:12.50px;background:#20e880">65</div>
<div class="c" style="left:160.30px;top:159.30px;width:33.50px;height:12.50px;line-height:12.50px;background:#8a00ea">0</div>
<div class="c" style="left:195.30px;top:159.30px;width:33.50px;height:12.50px;line-height:12.50px;background:#8a00ea">100</div>
<div class="c" style="left:230.30px;top:159.30px;width:33.50px;height:12.50px;line-height:12.50px;background:#8a00ea">100</div>
<div class="c" style="left:265.30px;top:159.30px;width:33.50px;height:12.50px;line-height:12.50px;background:#8a00ea">100</div>
<div class="c" style="left:300.30px;top:159.30px;width:33.50px;height:12.50px;line-height:12.50px;background:#8a00ea">100</div>
<div class="c" style="left:335.30px;top:159.30px;width:33.50px;height:12.50px;line-height:12.50px;background:#20d0b0">70</div>
<div class="c" style="left:370.30px;top:159.30px;width:33.50px;height:12.50px;line-height:12.50px;background:#20e880">65</div>
<div class="c" style="left:405.30px;top:159.30px;width:33.50px;height:12.50px;line-height:12.50px;background:#20e880">65</div>
<div class="c" style="left:440.30px;top:159.30px;width:33.50px;height:12.50px;line-height:12.50px;background:#20e880">65</div>
<div class="c" style="left:21.00px;top:173.30px;width:27.50px;height:12.50px;line-height:12.50px;background:#3cee3b">105</div>
<div class="c" style="left:55.30px;top:173.30px;width:33.50px;height:12.50px;line-height:12.50px;background:#20d0b0">70</div>
<div class="c" style="left:90.30px;top:173.30px;width:33.50px;height:12.50px;line-height:12.50px;background:#20d0b0">70</div>
<div class="c" style="left:125.30px;top:173.30px;width:33.50px;height:12.50px;line-height:12.50px;background:#20d0b0">70</div>
<div class="c" style="left:160.30px;top:173.30px;width:33.50px;height:12.50px;line-height:12.50px;background:#20d0b0">70</div>
<div class="c" style="left:195.30px;top:173.30px;width:33.50px;height:12.50px;line-height:12.50px;background:#8a00ea">100</div>
<div class="c" style="left:230.30px;top:173.30px;width:33.50px;height:12.50px;line-height:12.50px;background:#8a00ea">100</div>
<div class="c" style="left:265.30px;top:173.30px;width:33.50px;height:12.50px;line-height:12.50px;background:#8a00ea">100</div>
<div class="c" style="left:300.30px;top:173.30px;width:33.50px;height:12.50px;line-height:12.50px;background:#8a00ea">100</div>
<div class="c" style="left:335.30px;top:173.30px;width:33.50px;height:12.50px;line-height:12.50px;background:#20d0b0">70</div>
<div class="c" style="left:370.30px;top:173.30px;width:33.50px;height:12.50px;line-height:12.50px;background:#20d0b0">70</div>
<div class="c" style="left:405.30px;top:173.30px;width:33.50px;height:12.50px;line-height:12.50px;background:#20d0b0">70</div>
<div class="c" style="left:440.30px;top:173.30px;width:33.50px;height:12.50px;line-height:12.50px;background:#20d0b0">70</div>
<div class="c" style="left:21.00px;top:187.30px;width:27.50px;height:12.50px;line-height:12.50px;background:#34ee43">107</div>
<div class="c" style="left:55.30px;top:187.30px;width:33.50px;height:12.50px;line-height:12.50px;background:#20d0b0">70</div>
<div class="c" style="left:90.30px;top:187.30px;width:33.50px;height:12.50px;line-height:12.50px;background:#20d0b0">70</div>
<div class="c" style="left:125.30px;top:187.30px;width:33.50px;height:12.50px;line-height:12.50px;background:#20d0b0">70</div>
<div class="c" style="left:160.30px;top:187.30px;width:33.50px;height:12.50px;line-height:12.50px;background:#20d0b0">70</div>
<div class="c" style="left:195.30px;top:187.30px;width:33.50px;height:12.50px;line-height:12.50px;background:#8a00ea">100</div>
<div class="c" style="left:230.30px;top:187.30px;width:33.50px;height:12.50px;line-height:12.50px;background:#8a00ea">100</div>
<div class="c" style="left:265.30px;top:187.30px;width:33.50px;height:12.50px;line-height:12.50px;background:#8a00ea">100</div>
<div class="c" style="left:300.30px;top:187.30px;width:33.50px;height:12.50px;line-height:12.50px;background:#8a00ea">100</div>
<div class="c" style="left:335.30px;top:187.30px;width:33.50px;height:12.50px;line-height:12.50px;background:#20d0b0">70</div>
<div class="c" style="left:370.30px;top:187.30px;width:33.50px;height:12.50px;line-height:12.50px;background:#20d0b0">70</div>
<div class="c" style="left:405.30px;top:187.30px;width:33.50px;height:12.50px;line-height:12.50px;background:#20d0b0">70</div>
<div class="c" style="left:440.30px;top:187.30px;width:33.50px;height:12.50px;line-height:12.50px;background:#20d0b0">70</div>
<div class="c" style="left:21.00px;top:201.30px;width:27.50px;height:12.50px;line-height:12.50px;background:#2eee49">109</div>
<div class="c" style="left:55.30px;top:201.30px;width:33.50px;height:12.50px;line-height:12.50px;background:#8a00ea">100</div>
<div class="c" style="left:90.30px;top:201.30px;width:33.50px;height:12.50px;line-height:12.50px;background:#8a00ea">100</div>
<div class="c" style="left:125.30px;top:201.30px;width:33.50px;height:12.50px;line-height:12.50px;background:#8a00ea">100</div>
<div class="c" style="left:160.30px;top:201.30px;width:33.50px;height:12.50px;line-height:12.50px;background:#8a00ea">100</div>
<div class="c" style="left:195.30px;top:201.30px;width:33.50px;height:12.50px;line-height:12.50px;background:#8a00ea">100</div>
<div class="c" style="left:230.30px;top:201.30px;width:33.50px;height:12.50px;line-height:12.50px;background:#8a00ea">100</div>
<div class="c" style="left:265.30px;top:201.30px;width:33.50px;height:12.50px;line-height:12.50px;background:#8a00ea">100</div>
<div class="c" style="left:300.30px;top:201.30px;width:33.50px;height:12.50px;line-height:12.50px;background:#8a00ea">100</div>
<div class="c" style="left:335.30px;top:201.30px;width:33.50px;height:12.50px;line-height:12.50px;background:#8a00ea">100</div>
<div class="c" style="left:370.30px;top:201.30px;width:33.50px;height:12.50px;line-height:12.50px;background:#8a00ea">100</div>
<div class="c" style="left:405.30px;top:201.30px;width:33.50px;height:12.50px;line-height:12.50px;background:#8a00ea">100</div>
<div class="c" style="left:440.30px;top:201.30px;width:33.50px;height:12.50px;line-height:12.50px;background:#8a00ea">100</div>
<div class="c" style="left:21.00px;top:215.30px;width:27.50px;height:12.50px;line-height:12.50px;background:#28ee4f">111</div>
<div class="c" style="left:55.30px;top:215.30px;width:33.50px;height:12.50px;line-height:12.50px;background:#8a00ea">100</div>
<div class="c" style="left:90.30px;top:215.30px;width:33.50px;height:12.50px;line-height:12.50px;background:#8a00ea">100</div>
<div class="c" style="left:125.30px;top:215.30px;width:33.50px;height:12.50px;line-height:12.50px;background:#8a00ea">100</div>
<div class="c" style="left:160.30px;top:215.30px;width:33.50px;height:12.50px;line-height:12.50px;background:#8a00ea">100</div>
<div class="c" style="left:195.30px;top:215.30px;width:33.50px;height:12.50px;line-height:12.50px;background:#8a00ea">100</div>
<div class="c" style="left:230.30px;top:215.30px;width:33.50px;height:12.50px;line-height:12.50px;background:#8a00ea">100</div>
<div class="c" style="left:265.30px;top:215.30px;width:33.50px;height:12.50px;line-height:12.50px;background:#8a00ea">100</div>
<div class="c" style="left:300.30px;top:215.30px;width:33.50px;height:12.50px;line-height:12.50px;background:#8a00ea">100</div>
<div class="c" style="left:335.30px;top:215.30px;width:33.50px;height:12.50px;line-height:12.50px;background:#8a00ea">100</div>
<div class="c" style="left:370.30px;top:215.30px;width:33.50px;height:12.50px;line-height:12.50px;background:#8a00ea">100</div>
<div class="c" style="left:405.30px;top:215.30px;width:33.50px;height:12.50px;line-height:12.50px;background:#8a00ea">100</div>
<div class="c" style="left:440.30px;top:215.30px;width:33.50px;height:12.50px;line-height:12.50px;background:#8a00ea">100</div>
<div class="gbar" style="left:54.20px;top:234.00px;width:421.20px;height:12.00px;line-height:12.00px">%</div>
</div></div>
<div class="win" style="left:514.38px;top:2.13px;width:500.20px;height:280.10px;">
<div class="t" style="left:6px;top:3.6px;font-size:12px;line-height:16px;color:#1b2530;white-space:nowrap">Thermo Fan Duty-read image111.hex.bin</div>
<div class="cbtn" style="left:477.40px;top:4.5px;width:16px;height:16px"><div class="cx"></div></div>
<div class="cont" style="left:5px;top:23px;width:489.20px;height:252.10px">
<div class="t" style="left:10.80px;top:2.5px;font-size:11.8px;line-height:16px;color:#1a1a1a"><u>E</u>dit</div>
<div class="t" style="left:45.00px;top:2.5px;font-size:11.8px;line-height:16px;color:#1a1a1a"><u>V</u>iew</div>
<div class="t" style="left:84.00px;top:2.5px;font-size:11.8px;line-height:16px;color:#1a1a1a"><u>H</u>elp</div>
<div style="left:0;top:19px;width:489.20px;height:1px;background:#dedbd5"></div>
<div class="gbar" style="left:54.20px;top:23.20px;width:421.20px;height:12.40px;line-height:12.40px">Conditions</div>
<div style="left:54.30px;top:40.00px;width:421.00px;height:15px;background:#d9d6d0"></div>
<div class="c hd" style="left:55.30px;top:41.00px;width:33px;height:13px;line-height:13px">On1</div>
<div class="c hd" style="left:90.30px;top:41.00px;width:33px;height:13px;line-height:13px">On2</div>
<div class="c hd" style="left:125.30px;top:41.00px;width:33px;height:13px;line-height:13px">On3</div>
<div class="c hd" style="left:160.30px;top:41.00px;width:33px;height:13px;line-height:13px">On4</div>
<div class="c hd" style="left:195.30px;top:41.00px;width:33px;height:13px;line-height:13px">Off1</div>
<div class="c hd" style="left:230.30px;top:41.00px;width:33px;height:13px;line-height:13px">Off2</div>
<div class="c hd" style="left:265.30px;top:41.00px;width:33px;height:13px;line-height:13px">Off3</div>
<div class="c hd" style="left:300.30px;top:41.00px;width:33px;height:13px;line-height:13px">Off4</div>
<div class="c hd" style="left:335.30px;top:41.00px;width:33px;height:13px;line-height:13px">A/C1</div>
<div class="c hd" style="left:370.30px;top:41.00px;width:33px;height:13px;line-height:13px">A/C2</div>
<div class="c hd" style="left:405.30px;top:41.00px;width:33px;height:13px;line-height:13px">A/C3</div>
<div class="c hd" style="left:440.30px;top:41.00px;width:33px;height:13px;line-height:13px">A/C4</div>
<div class="gbar" style="left:3.00px;top:60.30px;width:12.80px;height:166.40px"><div class="vt" style="left:6.40px;top:83.20px">Engine Temp (Celsius)</div></div>
<div style="left:20.00px;top:60.30px;width:29px;height:169.00px;background:#e6e3de"></div>
<div style="left:54.30px;top:60.30px;width:421.00px;height:169.00px;background:#dad6d2"></div>
<div class="c" style="left:21.00px;top:61.30px;width:27.50px;height:12.50px;line-height:12.50px;background:#75ee12">88</div>
<div class="c sel" style="left:55.30px;top:61.30px;width:33.50px;height:12.50px;line-height:12.50px">0</div>
<div class="c" style="left:90.30px;top:61.30px;width:33.50px;height:12.50px;line-height:12.50px;background:#8a00ea">0</div>
<div class="c" style="left:125.30px;top:61.30px;width:33.50px;height:12.50px;line-height:12.50px;background:#8a00ea">0</div>
<div class="c" style="left:160.30px;top:61.30px;width:33.50px;height:12.50px;line-height:12.50px;background:#8a00ea">0</div>
<div class="c" style="left:195.30px;top:61.30px;width:33.50px;height:12.50px;line-height:12.50px;background:#8a00ea">100</div>
<div class="c" style="left:230.30px;top:61.30px;width:33.50px;height:12.50px;line-height:12.50px;background:#8a00ea">100</div>
<div class="c" style="left:265.30px;top:61.30px;width:33.50px;height:12.50px;line-height:12.50px;background:#8a00ea">100</div>
<div class="c" style="left:300.30px;top:61.30px;width:33.50px;height:12.50px;line-height:12.50px;background:#8a00ea">100</div>
<div class="c" style="left:335.30px;top:61.30px;width:33.50px;height:12.50px;line-height:12.50px;background:#20e880">65</div>
<div class="c" style="left:370.30px;top:61.30px;width:33.50px;height:12.50px;line-height:12.50px;background:#ccbb00">40</div>
<div class="c" style="left:405.30px;top:61.30px;width:33.50px;height:12.50px;line-height:12.50px;background:#8a00ea">0</div>
<div class="c" style="left:440.30px;top:61.30px;width:33.50px;height:12.50px;line-height:12.50px;background:#8a00ea">0</div>
<div class="c" style="left:21.00px;top:75.30px;width:27.50px;height:12.50px;line-height:12.50px;background:#6fee15">90</div>
<div class="c" style="left:55.30px;top:75.30px;width:33.50px;height:12.50px;line-height:12.50px;background:#8a00ea">0</div>
<div class="c" style="left:90.30px;top:75.30px;width:33.50px;height:12.50px;line-height:12.50px;background:#8a00ea">0</div>
<div class="c" style="left:125.30px;top:75.30px;width:33.50px;height:12.50px;line-height:12.50px;background:#8a00ea">0</div>
<div class="c" style="left:160.30px;top:75.30px;width:33.50px;height:12.50px;line-height:12.50px;background:#8a00ea">0</div>
<div class="c" style="left:195.30px;top:75.30px;width:33.50px;height:12.50px;line-height:12.50px;background:#8a00ea">100</div>
<div class="c" style="left:230.30px;top:75.30px;width:33.50px;height:12.50px;line-height:12.50px;background:#8a00ea">100</div>
<div class="c" style="left:265.30px;top:75.30px;width:33.50px;height:12.50px;line-height:12.50px;background:#8a00ea">100</div>
<div class="c" style="left:300.30px;top:75.30px;width:33.50px;height:12.50px;line-height:12.50px;background:#8a00ea">100</div>
<div class="c" style="left:335.30px;top:75.30px;width:33.50px;height:12.50px;line-height:12.50px;background:#20e880">65</div>
<div class="c" style="left:370.30px;top:75.30px;width:33.50px;height:12.50px;line-height:12.50px;background:#ccbb00">40</div>
<div class="c" style="left:405.30px;top:75.30px;width:33.50px;height:12.50px;line-height:12.50px;background:#8a00ea">0</div>
<div class="c" style="left:440.30px;top:75.30px;width:33.50px;height:12.50px;line-height:12.50px;background:#8a00ea">0</div>
<div class="c" style="left:21.00px;top:89.30px;width:27.50px;height:12.50px;line-height:12.50px;background:#69ee18">92</div>
<div class="c" style="left:55.30px;top:89.30px;width:33.50px;height:12.50px;line-height:12.50px;background:#f46620">30</div>
<div class="c" style="left:90.30px;top:89.30px;width:33.50px;height:12.50px;line-height:12.50px;background:#8a00ea">0</div>
<div class="c" style="left:125.30px;top:89.30px;width:33.50px;height:12.50px;line-height:12.50px;background:#8a00ea">0</div>
<div class="c" style="left:160.30px;top:89.30px;width:33.50px;height:12.50px;line-height:12.50px;background:#8a00ea">0</div>
<div class="c" style="left:195.30px;top:89.30px;width:33.50px;height:12.50px;line-height:12.50px;background:#8a00ea">100</div>
<div class="c" style="left:230.30px;top:89.30px;width:33.50px;height:12.50px;line-height:12.50px;background:#8a00ea">100</div>
<div class="c" style="left:265.30px;top:89.30px;width:33.50px;height:12.50px;line-height:12.50px;background:#8a00ea">100</div>
<div class="c" style="left:300.30px;top:89.30px;width:33.50px;height:12.50px;line-height:12.50px;background:#8a00ea">100</div>
<div class="c" style="left:335.30px;top:89.30px;width:33.50px;height:12.50px;line-height:12.50px;background:#20e880">65</div>
<div class="c" style="left:370.30px;top:89.30px;width:33.50px;height:12.50px;line-height:12.50px;background:#ccbb00">40</div>
<div class="c" style="left:405.30px;top:89.30px;width:33.50px;height:12.50px;line-height:12.50px;background:#8a00ea">0</div>
<div class="c" style="left:440.30px;top:89.30px;width:33.50px;height:12.50px;line-height:12.50px;background:#8a00ea">0</div>
<div class="c" style="left:21.00px;top:103.30px;width:27.50px;height:12.50px;line-height:12.50px;background:#62ee1b">94</div>
<div class="c" style="left:55.30px;top:103.30px;width:33.50px;height:12.50px;line-height:12.50px;background:#ed8c10">34</div>
<div class="c" style="left:90.30px;top:103.30px;width:33.50px;height:12.50px;line-height:12.50px;background:#ed8c10">34</div>
<div class="c" style="left:125.30px;top:103.30px;width:33.50px;height:12.50px;line-height:12.50px;background:#8a00ea">0</div>
<div class="c" style="left:160.30px;top:103.30px;width:33.50px;height:12.50px;line-height:12.50px;background:#8a00ea">0</div>
<div class="c" style="left:195.30px;top:103.30px;width:33.50px;height:12.50px;line-height:12.50px;background:#8a00ea">100</div>
<div class="c" style="left:230.30px;top:103.30px;width:33.50px;height:12.50px;line-height:12.50px;background:#8a00ea">100</div>
<div class="c" style="left:265.30px;top:103.30px;width:33.50px;height:12.50px;line-height:12.50px;background:#8a00ea">100</div>
<div class="c" style="left:300.30px;top:103.30px;width:33.50px;height:12.50px;line-height:12.50px;background:#8a00ea">100</div>
<div class="c" style="left:335.30px;top:103.30px;width:33.50px;height:12.50px;line-height:12.50px;background:#20d0b0">70</div>
<div class="c" style="left:370.30px;top:103.30px;width:33.50px;height:12.50px;line-height:12.50px;background:#ccbb00">40</div>
<div class="c" style="left:405.30px;top:103.30px;width:33.50px;height:12.50px;line-height:12.50px;background:#8a00ea">0</div>
<div class="c" style="left:440.30px;top:103.30px;width:33.50px;height:12.50px;line-height:12.50px;background:#8a00ea">0</div>
<div class="c" style="left:21.00px;top:117.30px;width:27.50px;height:12.50px;line-height:12.50px;background:#5cee1f">96</div>
<div class="c" style="left:55.30px;top:117.30px;width:33.50px;height:12.50px;line-height:12.50px;background:#ccbb00">40</div>
<div class="c" style="left:90.30px;top:117.30px;width:33.50px;height:12.50px;line-height:12.50px;background:#ccbb00">40</div>
<div class="c" style="left:125.30px;top:117.30px;width:33.50px;height:12.50px;line-height:12.50px;background:#8a00ea">0</div>
<div class="c" style="left:160.30px;top:117.30px;width:33.50px;height:12.50px;line-height:12.50px;background:#8a00ea">0</div>
<div class="c" style="left:195.30px;top:117.30px;width:33.50px;height:12.50px;line-height:12.50px;background:#8a00ea">100</div>
<div class="c" style="left:230.30px;top:117.30px;width:33.50px;height:12.50px;line-height:12.50px;background:#8a00ea">100</div>
<div class="c" style="left:265.30px;top:117.30px;width:33.50px;height:12.50px;line-height:12.50px;background:#8a00ea">100</div>
<div class="c" style="left:300.30px;top:117.30px;width:33.50px;height:12.50px;line-height:12.50px;background:#8a00ea">100</div>
<div class="c" style="left:335.30px;top:117.30px;width:33.50px;height:12.50px;line-height:12.50px;background:#20d0b0">70</div>
<div class="c" style="left:370.30px;top:117.30px;width:33.50px;height:12.50px;line-height:12.50px;background:#ccbb00">40</div>
<div class="c" style="left:405.30px;top:117.30px;width:33.50px;height:12.50px;line-height:12.50px;background:#8a00ea">0</div>
<div class="c" style="left:440.30px;top:117.30px;width:33.50px;height:12.50px;line-height:12.50px;background:#8a00ea">0</div>
<div class="c" style="left:21.00px;top:131.30px;width:27.50px;height:12.50px;line-height:12.50px;background:#55ee22">98</div>
<div class="c" style="left:55.30px;top:131.30px;width:33.50px;height:12.50px;line-height:12.50px;background:#77ee11">50</div>
<div class="c" style="left:90.30px;top:131.30px;width:33.50px;height:12.50px;line-height:12.50px;background:#77ee11">50</div>
<div class="c" style="left:125.30px;top:131.30px;width:33.50px;height:12.50px;line-height:12.50px;background:#ccbb00">40</div>
<div class="c" style="left:160.30px;top:131.30px;width:33.50px;height:12.50px;line-height:12.50px;background:#8a00ea">0</div>
<div class="c" style="left:195.30px;top:131.30px;width:33.50px;height:12.50px;line-height:12.50px;background:#8a00ea">100</div>
<div class="c" style="left:230.30px;top:131.30px;width:33.50px;height:12.50px;line-height:12.50px;background:#8a00ea">100</div>
<div class="c" style="left:265.30px;top:131.30px;width:33.50px;height:12.50px;line-height:12.50px;background:#8a00ea">100</div>
<div class="c" style="left:300.30px;top:131.30px;width:33.50px;height:12.50px;line-height:12.50px;background:#8a00ea">100</div>
<div class="c" style="left:335.30px;top:131.30px;width:33.50px;height:12.50px;line-height:12.50px;background:#20d0b0">70</div>
<div class="c" style="left:370.30px;top:131.30px;width:33.50px;height:12.50px;line-height:12.50px;background:#77ee11">50</div>
<div class="c" style="left:405.30px;top:131.30px;width:33.50px;height:12.50px;line-height:12.50px;background:#8a00ea">0</div>
<div class="c" style="left:440.30px;top:131.30px;width:33.50px;height:12.50px;line-height:12.50px;background:#8a00ea">0</div>
<div class="c" style="left:21.00px;top:145.30px;width:27.50px;height:12.50px;line-height:12.50px;background:#4aee2d">101</div>
<div class="c" style="left:55.30px;top:145.30px;width:33.50px;height:12.50px;line-height:12.50px;background:#22ee55">60</div>
<div class="c" style="left:90.30px;top:145.30px;width:33.50px;height:12.50px;line-height:12.50px;background:#22ee55">60</div>
<div class="c" style="left:125.30px;top:145.30px;width:33.50px;height:12.50px;line-height:12.50px;background:#77ee11">50</div>
<div class="c" style="left:160.30px;top:145.30px;width:33.50px;height:12.50px;line-height:12.50px;background:#8a00ea">0</div>
<div class="c" style="left:195.30px;top:145.30px;width:33.50px;height:12.50px;line-height:12.50px;background:#8a00ea">100</div>
<div class="c" style="left:230.30px;top:145.30px;width:33.50px;height:12.50px;line-height:12.50px;background:#8a00ea">100</div>
<div class="c" style="left:265.30px;top:145.30px;width:33.50px;height:12.50px;line-height:12.50px;background:#8a00ea">100</div>
<div class="c" style="left:300.30px;top:145.30px;width:33.50px;height:12.50px;line-height:12.50px;background:#8a00ea">100</div>
<div class="c" style="left:335.30px;top:145.30px;width:33.50px;height:12.50px;line-height:12.50px;background:#20d0b0">70</div>
<div class="c" style="left:370.30px;top:145.30px;width:33.50px;height:12.50px;line-height:12.50px;background:#22ee55">60</div>
<div class="c" style="left:405.30px;top:145.30px;width:33.50px;height:12.50px;line-height:12.50px;background:#22ee55">60</div>
<div class="c" style="left:440.30px;top:145.30px;width:33.50px;height:12.50px;line-height:12.50px;background:#8a00ea">0</div>
<div class="c" style="left:21.00px;top:159.30px;width:27.50px;height:12.50px;line-height:12.50px;background:#43ee34">103</div>
<div class="c" style="left:55.30px;top:159.30px;width:33.50px;height:12.50px;line-height:12.50px;background:#20e880">65</div>
<div class="c" style="left:90.30px;top:159.30px;width:33.50px;height:12.50px;line-height:12.50px;background:#20e880">65</div>
<div class="c" style="left:125.30px;top:159.30px;width:33.50px;height:12.50px;line-height:12.50px;background:#20e880">65</div>
<div class="c" style="left:160.30px;top:159.30px;width:33.50px;height:12.50px;line-height:12.50px;background:#8a00ea">0</div>
<div class="c" style="left:195.30px;top:159.30px;width:33.50px;height:12.50px;line-height:12.50px;background:#8a00ea">100</div>
<div class="c" style="left:230.30px;top:159.30px;width:33.50px;height:12.50px;line-height:12.50px;background:#8a00ea">100</div>
<div class="c" style="left:265.30px;top:159.30px;width:33.50px;height:12.50px;line-height:12.50px;background:#8a00ea">100</div>
<div class="c" style="left:300.30px;top:159.30px;width:33.50px;height:12.50px;line-height:12.50px;background:#8a00ea">100</div>
<div class="c" style="left:335.30px;top:159.30px;width:33.50px;height:12.50px;line-height:12.50px;background:#20d0b0">70</div>
<div class="c" style="left:370.30px;top:159.30px;width:33.50px;height:12.50px;line-height:12.50px;background:#20e880">65</div>
<div class="c" style="left:405.30px;top:159.30px;width:33.50px;height:12.50px;line-height:12.50px;background:#20e880">65</div>
<div class="c" style="left:440.30px;top:159.30px;width:33.50px;height:12.50px;line-height:12.50px;background:#20e880">65</div>
<div class="c" style="left:21.00px;top:173.30px;width:27.50px;height:12.50px;line-height:12.50px;background:#3cee3b">105</div>
<div class="c" style="left:55.30px;top:173.30px;width:33.50px;height:12.50px;line-height:12.50px;background:#20d0b0">70</div>
<div class="c" style="left:90.30px;top:173.30px;width:33.50px;height:12.50px;line-height:12.50px;background:#20d0b0">70</div>
<div class="c" style="left:125.30px;top:173.30px;width:33.50px;height:12.50px;line-height:12.50px;background:#20d0b0">70</div>
<div class="c" style="left:160.30px;top:173.30px;width:33.50px;height:12.50px;line-height:12.50px;background:#20d0b0">70</div>
<div class="c" style="left:195.30px;top:173.30px;width:33.50px;height:12.50px;line-height:12.50px;background:#8a00ea">100</div>
<div class="c" style="left:230.30px;top:173.30px;width:33.50px;height:12.50px;line-height:12.50px;background:#8a00ea">100</div>
<div class="c" style="left:265.30px;top:173.30px;width:33.50px;height:12.50px;line-height:12.50px;background:#8a00ea">100</div>
<div class="c" style="left:300.30px;top:173.30px;width:33.50px;height:12.50px;line-height:12.50px;background:#8a00ea">100</div>
<div class="c" style="left:335.30px;top:173.30px;width:33.50px;height:12.50px;line-height:12.50px;background:#20d0b0">70</div>
<div class="c" style="left:370.30px;top:173.30px;width:33.50px;height:12.50px;line-height:12.50px;background:#20d0b0">70</div>
<div class="c" style="left:405.30px;top:173.30px;width:33.50px;height:12.50px;line-height:12.50px;background:#20d0b0">70</div>
<div class="c" style="left:440.30px;top:173.30px;width:33.50px;height:12.50px;line-height:12.50px;background:#20d0b0">70</div>
<div class="c" style="left:21.00px;top:187.30px;width:27.50px;height:12.50px;line-height:12.50px;background:#34ee43">107</div>
<div class="c" style="left:55.30px;top:187.30px;width:33.50px;height:12.50px;line-height:12.50px;background:#20d0b0">70</div>
<div class="c" style="left:90.30px;top:187.30px;width:33.50px;height:12.50px;line-height:12.50px;background:#20d0b0">70</div>
<div class="c" style="left:125.30px;top:187.30px;width:33.50px;height:12.50px;line-height:12.50px;background:#20d0b0">70</div>
<div class="c" style="left:160.30px;top:187.30px;width:33.50px;height:12.50px;line-height:12.50px;background:#20d0b0">70</div>
<div class="c" style="left:195.30px;top:187.30px;width:33.50px;height:12.50px;line-height:12.50px;background:#8a00ea">100</div>
<div class="c" style="left:230.30px;top:187.30px;width:33.50px;height:12.50px;line-height:12.50px;background:#8a00ea">100</div>
<div class="c" style="left:265.30px;top:187.30px;width:33.50px;height:12.50px;line-height:12.50px;background:#8a00ea">100</div>
<div class="c" style="left:300.30px;top:187.30px;width:33.50px;height:12.50px;line-height:12.50px;background:#8a00ea">100</div>
<div class="c" style="left:335.30px;top:187.30px;width:33.50px;height:12.50px;line-height:12.50px;background:#20d0b0">70</div>
<div class="c" style="left:370.30px;top:187.30px;width:33.50px;height:12.50px;line-height:12.50px;background:#20d0b0">70</div>
<div class="c" style="left:405.30px;top:187.30px;width:33.50px;height:12.50px;line-height:12.50px;background:#20d0b0">70</div>
<div class="c" style="left:440.30px;top:187.30px;width:33.50px;height:12.50px;line-height:12.50px;background:#20d0b0">70</div>
<div class="c" style="left:21.00px;top:201.30px;width:27.50px;height:12.50px;line-height:12.50px;background:#2eee49">109</div>
<div class="c" style="left:55.30px;top:201.30px;width:33.50px;height:12.50px;line-height:12.50px;background:#8a00ea">100</div>
<div class="c" style="left:90.30px;top:201.30px;width:33.50px;height:12.50px;line-height:12.50px;background:#8a00ea">100</div>
<div class="c" style="left:125.30px;top:201.30px;width:33.50px;height:12.50px;line-height:12.50px;background:#8a00ea">100</div>
<div class="c" style="left:160.30px;top:201.30px;width:33.50px;height:12.50px;line-height:12.50px;background:#8a00ea">100</div>
<div class="c" style="left:195.30px;top:201.30px;width:33.50px;height:12.50px;line-height:12.50px;background:#8a00ea">100</div>
<div class="c" style="left:230.30px;top:201.30px;width:33.50px;height:12.50px;line-height:12.50px;background:#8a00ea">100</div>
<div class="c" style="left:265.30px;top:201.30px;width:33.50px;height:12.50px;line-height:12.50px;background:#8a00ea">100</div>
<div class="c" style="left:300.30px;top:201.30px;width:33.50px;height:12.50px;line-height:12.50px;background:#8a00ea">100</div>
<div class="c" style="left:335.30px;top:201.30px;width:33.50px;height:12.50px;line-height:12.50px;background:#8a00ea">100</div>
<div class="c" style="left:370.30px;top:201.30px;width:33.50px;height:12.50px;line-height:12.50px;background:#8a00ea">100</div>
<div class="c" style="left:405.30px;top:201.30px;width:33.50px;height:12.50px;line-height:12.50px;background:#8a00ea">100</div>
<div class="c" style="left:440.30px;top:201.30px;width:33.50px;height:12.50px;line-height:12.50px;background:#8a00ea">100</div>
<div class="c" style="left:21.00px;top:215.30px;width:27.50px;height:12.50px;line-height:12.50px;background:#28ee4f">111</div>
<div class="c" style="left:55.30px;top:215.30px;width:33.50px;height:12.50px;line-height:12.50px;background:#8a00ea">100</div>
<div class="c" style="left:90.30px;top:215.30px;width:33.50px;height:12.50px;line-height:12.50px;background:#8a00ea">100</div>
<div class="c" style="left:125.30px;top:215.30px;width:33.50px;height:12.50px;line-height:12.50px;background:#8a00ea">100</div>
<div class="c" style="left:160.30px;top:215.30px;width:33.50px;height:12.50px;line-height:12.50px;background:#8a00ea">100</div>
<div class="c" style="left:195.30px;top:215.30px;width:33.50px;height:12.50px;line-height:12.50px;background:#8a00ea">100</div>
<div class="c" style="left:230.30px;top:215.30px;width:33.50px;height:12.50px;line-height:12.50px;background:#8a00ea">100</div>
<div class="c" style="left:265.30px;top:215.30px;width:33.50px;height:12.50px;line-height:12.50px;background:#8a00ea">100</div>
<div class="c" style="left:300.30px;top:215.30px;width:33.50px;height:12.50px;line-height:12.50px;background:#8a00ea">100</div>
<div class="c" style="left:335.30px;top:215.30px;width:33.50px;height:12.50px;line-height:12.50px;background:#8a00ea">100</div>
<div class="c" style="left:370.30px;top:215.30px;width:33.50px;height:12.50px;line-height:12.50px;background:#8a00ea">100</div>
<div class="c" style="left:405.30px;top:215.30px;width:33.50px;height:12.50px;line-height:12.50px;background:#8a00ea">100</div>
<div class="c" style="left:440.30px;top:215.30px;width:33.50px;height:12.50px;line-height:12.50px;background:#8a00ea">100</div>
<div class="gbar" style="left:54.20px;top:234.00px;width:421.20px;height:12.00px;line-height:12.00px">%</div>
</div></div>
<div class="win" style="left:315.90px;top:249.60px;width:302.80px;height:600.00px;">
<div class="t" style="left:6px;top:3.6px;font-size:12px;line-height:16px;color:#1b2530;white-space:nowrap">Idle Stepper Look-up Table-1600MT_932700191...</div>
<div class="cbtn" style="left:280.00px;top:4.5px;width:16px;height:16px"><div class="cx"></div></div>
<div class="cont" style="left:5px;top:23px;width:291.80px;height:572.00px">
<div class="t" style="left:10.00px;top:2.5px;font-size:11.8px;line-height:16px;color:#1a1a1a"><u>E</u>dit</div>
<div class="t" style="left:44.00px;top:2.5px;font-size:11.8px;line-height:16px;color:#1a1a1a"><u>V</u>iew</div>
<div class="t" style="left:82.60px;top:2.5px;font-size:11.8px;line-height:16px;color:#1a1a1a"><u>H</u>elp</div>
<div style="left:0;top:19px;width:291.80px;height:1px;background:#dedbd5"></div>
<div class="gbar" style="left:52.80px;top:23.00px;width:225.80px;height:12.00px;line-height:12.00px">Coolant Temperature (Celsius)</div>
<div style="left:54.00px;top:40.00px;width:225.00px;height:14px;background:#e6e3de"></div>
<div class="c" style="left:55.00px;top:41.00px;width:27.00px;height:12.00px;line-height:12.00px;background:#9b00dc">-32</div>
<div class="c" style="left:83.00px;top:41.00px;width:27.00px;height:12.00px;line-height:12.00px;background:#df00a7">-8</div>
<div class="c" style="left:111.00px;top:41.00px;width:27.00px;height:12.00px;line-height:12.00px;background:#fd0f6b">7</div>
<div class="c" style="left:139.00px;top:41.00px;width:27.00px;height:12.00px;line-height:12.00px;background:#ff1d5a">13</div>
<div class="c" style="left:167.00px;top:41.00px;width:27.00px;height:12.00px;line-height:12.00px;background:#ff3245">20</div>
<div class="c" style="left:195.00px;top:41.00px;width:27.00px;height:12.00px;line-height:12.00px;background:#ff4334">27</div>
<div class="c" style="left:223.00px;top:41.00px;width:27.00px;height:12.00px;line-height:12.00px;background:#fa5c21">34</div>
<div class="c" style="left:251.00px;top:41.00px;width:27.00px;height:12.00px;line-height:12.00px;background:#f87515">41</div>
<div class="gbar" style="left:3.00px;top:61.00px;width:11.30px;height:377.00px"><div class="vt" style="left:5.65px;top:188.50px">LOAD (%)</div></div>
<div style="left:20.50px;top:60.60px;width:27px;height:379.00px;background:#e6e3de"></div>
<div style="left:54.00px;top:60.60px;width:225.00px;height:379.00px;background:#dad6d2"></div>
<div class="c" style="left:21.50px;top:61.60px;width:26.50px;height:12.50px;line-height:12.50px;background:#8a00ea">0</div>
<div class="c sel" style="left:55.00px;top:61.60px;width:26.50px;height:12.50px;line-height:12.50px">0</div>
<div class="c" style="left:83.00px;top:61.60px;width:26.50px;height:12.50px;line-height:12.50px;background:#8a00ea">0</div>
<div class="c" style="left:111.00px;top:61.60px;width:26.50px;height:12.50px;line-height:12.50px;background:#8a00ea">0</div>
<div class="c" style="left:139.00px;top:61.60px;width:26.50px;height:12.50px;line-height:12.50px;background:#8a00ea">0</div>
<div class="c" style="left:167.00px;top:61.60px;width:26.50px;height:12.50px;line-height:12.50px;background:#8a00ea">0</div>
<div class="c" style="left:195.00px;top:61.60px;width:26.50px;height:12.50px;line-height:12.50px;background:#8a00ea">0</div>
<div class="c" style="left:223.00px;top:61.60px;width:26.50px;height:12.50px;line-height:12.50px;background:#8a00ea">0</div>
<div class="c" style="left:251.00px;top:61.60px;width:26.50px;height:12.50px;line-height:12.50px;background:#8a00ea">0</div>
<div class="c" style="left:21.50px;top:75.60px;width:26.50px;height:12.50px;line-height:12.50px;background:#9600e0">6</div>
<div class="c" style="left:55.00px;top:75.60px;width:26.50px;height:12.50px;line-height:12.50px;background:#bb00cc">20</div>
<div class="c" style="left:83.00px;top:75.60px;width:26.50px;height:12.50px;line-height:12.50px;background:#bb00cc">20</div>
<div class="c" style="left:111.00px;top:75.60px;width:26.50px;height:12.50px;line-height:12.50px;background:#bb00cc">20</div>
<div class="c" style="left:139.00px;top:75.60px;width:26.50px;height:12.50px;line-height:12.50px;background:#bb00cc">20</div>
<div class="c" style="left:167.00px;top:75.60px;width:26.50px;height:12.50px;line-height:12.50px;background:#bb00cc">20</div>
<div class="c" style="left:195.00px;top:75.60px;width:26.50px;height:12.50px;line-height:12.50px;background:#bb00cc">20</div>
<div class="c" style="left:223.00px;top:75.60px;width:26.50px;height:12.50px;line-height:12.50px;background:#bb00cc">20</div>
<div class="c" style="left:251.00px;top:75.60px;width:26.50px;height:12.50px;line-height:12.50px;background:#bb00cc">20</div>
<div class="c" style="left:21.50px;top:89.60px;width:26.50px;height:12.50px;line-height:12.50px;background:#a300d8">12</div>
<div class="c" style="left:55.00px;top:89.60px;width:26.50px;height:12.50px;line-height:12.50px;background:#f20481">39</div>
<div class="c" style="left:83.00px;top:89.60px;width:26.50px;height:12.50px;line-height:12.50px;background:#f20481">39</div>
<div class="c" style="left:111.00px;top:89.60px;width:26.50px;height:12.50px;line-height:12.50px;background:#f20481">39</div>
<div class="c" style="left:139.00px;top:89.60px;width:26.50px;height:12.50px;line-height:12.50px;background:#f20481">39</div>
<div class="c" style="left:167.00px;top:89.60px;width:26.50px;height:12.50px;line-height:12.50px;background:#f20481">39</div>
<div class="c" style="left:195.00px;top:89.60px;width:26.50px;height:12.50px;line-height:12.50px;background:#f20481">39</div>
<div class="c" style="left:223.00px;top:89.60px;width:26.50px;height:12.50px;line-height:12.50px;background:#f20481">39</div>
<div class="c" style="left:251.00px;top:89.60px;width:26.50px;height:12.50px;line-height:12.50px;background:#f20481">39</div>
<div class="c" style="left:21.50px;top:103.60px;width:26.50px;height:12.50px;line-height:12.50px;background:#b200d0">19</div>
<div class="c" style="left:55.00px;top:103.60px;width:26.50px;height:12.50px;line-height:12.50px;background:#ff3c3c">60</div>
<div class="c" style="left:83.00px;top:103.60px;width:26.50px;height:12.50px;line-height:12.50px;background:#ff3c3c">60</div>
<div class="c" style="left:111.00px;top:103.60px;width:26.50px;height:12.50px;line-height:12.50px;background:#ff3c3c">60</div>
<div class="c" style="left:139.00px;top:103.60px;width:26.50px;height:12.50px;line-height:12.50px;background:#ff3c3c">60</div>
<div class="c" style="left:167.00px;top:103.60px;width:26.50px;height:12.50px;line-height:12.50px;background:#ff3c3c">60</div>
<div class="c" style="left:195.00px;top:103.60px;width:26.50px;height:12.50px;line-height:12.50px;background:#ff3c3c">60</div>
<div class="c" style="left:223.00px;top:103.60px;width:26.50px;height:12.50px;line-height:12.50px;background:#ff3c3c">60</div>
<div class="c" style="left:251.00px;top:103.60px;width:26.50px;height:12.50px;line-height:12.50px;background:#ff3c3c">60</div>
<div class="c" style="left:21.50px;top:117.60px;width:26.50px;height:12.50px;line-height:12.50px;background:#c100c6">25</div>
<div class="c" style="left:55.00px;top:117.60px;width:26.50px;height:12.50px;line-height:12.50px;background:#ff4334">63</div>
<div class="c" style="left:83.00px;top:117.60px;width:26.50px;height:12.50px;line-height:12.50px;background:#ff4334">63</div>
<div class="c" style="left:111.00px;top:117.60px;width:26.50px;height:12.50px;line-height:12.50px;background:#ff4334">63</div>
<div class="c" style="left:139.00px;top:117.60px;width:26.50px;height:12.50px;line-height:12.50px;background:#ff4334">63</div>
<div class="c" style="left:167.00px;top:117.60px;width:26.50px;height:12.50px;line-height:12.50px;background:#ff4334">63</div>
<div class="c" style="left:195.00px;top:117.60px;width:26.50px;height:12.50px;line-height:12.50px;background:#ff4334">63</div>
<div class="c" style="left:223.00px;top:117.60px;width:26.50px;height:12.50px;line-height:12.50px;background:#ff4334">63</div>
<div class="c" style="left:251.00px;top:117.60px;width:26.50px;height:12.50px;line-height:12.50px;background:#ff4334">63</div>
<div class="c" style="left:21.50px;top:131.60px;width:26.50px;height:12.50px;line-height:12.50px;background:#d400b3">31</div>
<div class="c" style="left:55.00px;top:131.60px;width:26.50px;height:12.50px;line-height:12.50px;background:#ff4a2d">65</div>
<div class="c" style="left:83.00px;top:131.60px;width:26.50px;height:12.50px;line-height:12.50px;background:#ff4a2d">65</div>
<div class="c" style="left:111.00px;top:131.60px;width:26.50px;height:12.50px;line-height:12.50px;background:#ff4a2d">65</div>
<div class="c" style="left:139.00px;top:131.60px;width:26.50px;height:12.50px;line-height:12.50px;background:#ff4a2d">65</div>
<div class="c" style="left:167.00px;top:131.60px;width:26.50px;height:12.50px;line-height:12.50px;background:#ff4a2d">65</div>
<div class="c" style="left:195.00px;top:131.60px;width:26.50px;height:12.50px;line-height:12.50px;background:#ff4a2d">65</div>
<div class="c" style="left:223.00px;top:131.60px;width:26.50px;height:12.50px;line-height:12.50px;background:#ff4a2d">65</div>
<div class="c" style="left:251.00px;top:131.60px;width:26.50px;height:12.50px;line-height:12.50px;background:#ff4a2d">65</div>
<div class="c" style="left:21.50px;top:145.60px;width:26.50px;height:12.50px;line-height:12.50px;background:#e5009a">38</div>
<div class="c" style="left:55.00px;top:145.60px;width:26.50px;height:12.50px;line-height:12.50px;background:#ff5522">68</div>
<div class="c" style="left:83.00px;top:145.60px;width:26.50px;height:12.50px;line-height:12.50px;background:#ff5522">68</div>
<div class="c" style="left:111.00px;top:145.60px;width:26.50px;height:12.50px;line-height:12.50px;background:#ff5522">68</div>
<div class="c" style="left:139.00px;top:145.60px;width:26.50px;height:12.50px;line-height:12.50px;background:#ff5522">68</div>
<div class="c" style="left:167.00px;top:145.60px;width:26.50px;height:12.50px;line-height:12.50px;background:#ff5522">68</div>
<div class="c" style="left:195.00px;top:145.60px;width:26.50px;height:12.50px;line-height:12.50px;background:#ff5522">68</div>
<div class="c" style="left:223.00px;top:145.60px;width:26.50px;height:12.50px;line-height:12.50px;background:#ff5522">68</div>
<div class="c" style="left:251.00px;top:145.60px;width:26.50px;height:12.50px;line-height:12.50px;background:#ff5522">68</div>
<div class="c" style="left:21.50px;top:159.60px;width:26.50px;height:12.50px;line-height:12.50px;background:#f00284">44</div>
<div class="c" style="left:55.00px;top:159.60px;width:26.50px;height:12.50px;line-height:12.50px;background:#fa5e21">70</div>
<div class="c" style="left:83.00px;top:159.60px;width:26.50px;height:12.50px;line-height:12.50px;background:#fa5e21">70</div>
<div class="c" style="left:111.00px;top:159.60px;width:26.50px;height:12.50px;line-height:12.50px;background:#fa5e21">70</div>
<div class="c" style="left:139.00px;top:159.60px;width:26.50px;height:12.50px;line-height:12.50px;background:#fa5e21">70</div>
<div class="c" style="left:167.00px;top:159.60px;width:26.50px;height:12.50px;line-height:12.50px;background:#fa5e21">70</div>
<div class="c" style="left:195.00px;top:159.60px;width:26.50px;height:12.50px;line-height:12.50px;background:#fa5e21">70</div>
<div class="c" style="left:223.00px;top:159.60px;width:26.50px;height:12.50px;line-height:12.50px;background:#fa5e21">70</div>
<div class="c" style="left:251.00px;top:159.60px;width:26.50px;height:12.50px;line-height:12.50px;background:#fa5e21">70</div>
<div class="c" style="left:21.50px;top:173.60px;width:26.50px;height:12.50px;line-height:12.50px;background:#fb0d6e">50</div>
<div class="c" style="left:55.00px;top:173.60px;width:26.50px;height:12.50px;line-height:12.50px;background:#f56a1d">73</div>
<div class="c" style="left:83.00px;top:173.60px;width:26.50px;height:12.50px;line-height:12.50px;background:#f56a1d">73</div>
<div class="c" style="left:111.00px;top:173.60px;width:26.50px;height:12.50px;line-height:12.50px;background:#f56a1d">73</div>
<div class="c" style="left:139.00px;top:173.60px;width:26.50px;height:12.50px;line-height:12.50px;background:#f56a1d">73</div>
<div class="c" style="left:167.00px;top:173.60px;width:26.50px;height:12.50px;line-height:12.50px;background:#f56a1d">73</div>
<div class="c" style="left:195.00px;top:173.60px;width:26.50px;height:12.50px;line-height:12.50px;background:#f56a1d">73</div>
<div class="c" style="left:223.00px;top:173.60px;width:26.50px;height:12.50px;line-height:12.50px;background:#f56a1d">73</div>
<div class="c" style="left:251.00px;top:173.60px;width:26.50px;height:12.50px;line-height:12.50px;background:#f56a1d">73</div>
<div class="c" style="left:21.50px;top:187.60px;width:26.50px;height:12.50px;line-height:12.50px;background:#ff1a5d">56</div>
<div class="c" style="left:55.00px;top:187.60px;width:26.50px;height:12.50px;line-height:12.50px;background:#f77118">75</div>
<div class="c" style="left:83.00px;top:187.60px;width:26.50px;height:12.50px;line-height:12.50px;background:#f77118">75</div>
<div class="c" style="left:111.00px;top:187.60px;width:26.50px;height:12.50px;line-height:12.50px;background:#f77118">75</div>
<div class="c" style="left:139.00px;top:187.60px;width:26.50px;height:12.50px;line-height:12.50px;background:#f77118">75</div>
<div class="c" style="left:167.00px;top:187.60px;width:26.50px;height:12.50px;line-height:12.50px;background:#f77118">75</div>
<div class="c" style="left:195.00px;top:187.60px;width:26.50px;height:12.50px;line-height:12.50px;background:#f77118">75</div>
<div class="c" style="left:223.00px;top:187.60px;width:26.50px;height:12.50px;line-height:12.50px;background:#f77516">76</div>
<div class="c" style="left:251.00px;top:187.60px;width:26.50px;height:12.50px;line-height:12.50px;background:#f77516">76</div>
<div class="c" style="left:21.50px;top:201.60px;width:26.50px;height:12.50px;line-height:12.50px;background:#ff294e">62</div>
<div class="c" style="left:55.00px;top:201.60px;width:26.50px;height:12.50px;line-height:12.50px;background:#f77914">77</div>
<div class="c" style="left:83.00px;top:201.60px;width:26.50px;height:12.50px;line-height:12.50px;background:#f77914">77</div>
<div class="c" style="left:111.00px;top:201.60px;width:26.50px;height:12.50px;line-height:12.50px;background:#f77914">77</div>
<div class="c" style="left:139.00px;top:201.60px;width:26.50px;height:12.50px;line-height:12.50px;background:#f77914">77</div>
<div class="c" style="left:167.00px;top:201.60px;width:26.50px;height:12.50px;line-height:12.50px;background:#f77914">77</div>
<div class="c" style="left:195.00px;top:201.60px;width:26.50px;height:12.50px;line-height:12.50px;background:#f57d13">78</div>
<div class="c" style="left:223.00px;top:201.60px;width:26.50px;height:12.50px;line-height:12.50px;background:#f38212">79</div>
<div class="c" style="left:251.00px;top:201.60px;width:26.50px;height:12.50px;line-height:12.50px;background:#f38212">79</div>
<div class="c" style="left:21.50px;top:215.60px;width:26.50px;height:12.50px;line-height:12.50px;background:#ff3c3c">69</div>
<div class="c" style="left:55.00px;top:215.60px;width:26.50px;height:12.50px;line-height:12.50px;background:#f38212">79</div>
<div class="c" style="left:83.00px;top:215.60px;width:26.50px;height:12.50px;line-height:12.50px;background:#f38212">79</div>
<div class="c" style="left:111.00px;top:215.60px;width:26.50px;height:12.50px;line-height:12.50px;background:#f38212">79</div>
<div class="c" style="left:139.00px;top:215.60px;width:26.50px;height:12.50px;line-height:12.50px;background:#f38212">79</div>
<div class="c" style="left:167.00px;top:215.60px;width:26.50px;height:12.50px;line-height:12.50px;background:#f38212">79</div>
<div class="c" style="left:195.00px;top:215.60px;width:26.50px;height:12.50px;line-height:12.50px;background:#ef8b10">81</div>
<div class="c" style="left:223.00px;top:215.60px;width:26.50px;height:12.50px;line-height:12.50px;background:#eb8e0d">83</div>
<div class="c" style="left:251.00px;top:215.60px;width:26.50px;height:12.50px;line-height:12.50px;background:#e9900b">84</div>
<div class="c" style="left:21.50px;top:229.60px;width:26.50px;height:12.50px;line-height:12.50px;background:#ff4b2c">75</div>
<div class="c" style="left:55.00px;top:229.60px;width:26.50px;height:12.50px;line-height:12.50px;background:#ef8b10">81</div>
<div class="c" style="left:83.00px;top:229.60px;width:26.50px;height:12.50px;line-height:12.50px;background:#ef8b10">81</div>
<div class="c" style="left:111.00px;top:229.60px;width:26.50px;height:12.50px;line-height:12.50px;background:#ef8b10">81</div>
<div class="c" style="left:139.00px;top:229.60px;width:26.50px;height:12.50px;line-height:12.50px;background:#ef8b10">81</div>
<div class="c" style="left:167.00px;top:229.60px;width:26.50px;height:12.50px;line-height:12.50px;background:#ed8d0f">82</div>
<div class="c" style="left:195.00px;top:229.60px;width:26.50px;height:12.50px;line-height:12.50px;background:#e39406">87</div>
<div class="c" style="left:223.00px;top:229.60px;width:26.50px;height:12.50px;line-height:12.50px;background:#da9f00">91</div>
<div class="c" style="left:251.00px;top:229.60px;width:26.50px;height:12.50px;line-height:12.50px;background:#d2b000">94</div>
<div class="c" style="left:21.50px;top:243.60px;width:26.50px;height:12.50px;line-height:12.50px;background:#f85f21">81</div>
<div class="c" style="left:55.00px;top:243.60px;width:26.50px;height:12.50px;line-height:12.50px;background:#eb8e0d">83</div>
<div class="c" style="left:83.00px;top:243.60px;width:26.50px;height:12.50px;line-height:12.50px;background:#eb8e0d">83</div>
<div class="c" style="left:111.00px;top:243.60px;width:26.50px;height:12.50px;line-height:12.50px;background:#e9900b">84</div>
<div class="c" style="left:139.00px;top:243.60px;width:26.50px;height:12.50px;line-height:12.50px;background:#e9900b">84</div>
<div class="c" style="left:167.00px;top:243.60px;width:26.50px;height:12.50px;line-height:12.50px;background:#e79209">85</div>
<div class="c" style="left:195.00px;top:243.60px;width:26.50px;height:12.50px;line-height:12.50px;background:#bfbb00">99</div>
<div class="c" style="left:223.00px;top:243.60px;width:26.50px;height:12.50px;line-height:12.50px;background:#8fe205">113</div>
<div class="c" style="left:251.00px;top:243.60px;width:26.50px;height:12.50px;line-height:12.50px;background:#85e70a">116</div>
<div class="c" style="left:21.50px;top:257.60px;width:26.50px;height:12.50px;line-height:12.50px;background:#f87614">88</div>
<div class="c" style="left:55.00px;top:257.60px;width:26.50px;height:12.50px;line-height:12.50px;background:#e59307">86</div>
<div class="c" style="left:83.00px;top:257.60px;width:26.50px;height:12.50px;line-height:12.50px;background:#e59307">86</div>
<div class="c" style="left:111.00px;top:257.60px;width:26.50px;height:12.50px;line-height:12.50px;background:#e59307">86</div>
<div class="c" style="left:139.00px;top:257.60px;width:26.50px;height:12.50px;line-height:12.50px;background:#e39406">87</div>
<div class="c" style="left:167.00px;top:257.60px;width:26.50px;height:12.50px;line-height:12.50px;background:#e19604">88</div>
<div class="c" style="left:195.00px;top:257.60px;width:26.50px;height:12.50px;line-height:12.50px;background:#adc900">104</div>
<div class="c" style="left:223.00px;top:257.60px;width:26.50px;height:12.50px;line-height:12.50px;background:#77ee11">120</div>
<div class="c" style="left:251.00px;top:257.60px;width:26.50px;height:12.50px;line-height:12.50px;background:#77ee11">120</div>
<div class="c" style="left:21.50px;top:271.60px;width:26.50px;height:12.50px;line-height:12.50px;background:#ed8d0f">94</div>
<div class="c" style="left:55.00px;top:271.60px;width:26.50px;height:12.50px;line-height:12.50px;background:#e19604">88</div>
<div class="c" style="left:83.00px;top:271.60px;width:26.50px;height:12.50px;line-height:12.50px;background:#e19604">88</div>
<div class="c" style="left:111.00px;top:271.60px;width:26.50px;height:12.50px;line-height:12.50px;background:#e19604">88</div>
<div class="c" style="left:139.00px;top:271.60px;width:26.50px;height:12.50px;line-height:12.50px;background:#da9f00">91</div>
<div class="c" style="left:167.00px;top:271.60px;width:26.50px;height:12.50px;line-height:12.50px;background:#d2b000">94</div>
<div class="c" style="left:195.00px;top:271.60px;width:26.50px;height:12.50px;line-height:12.50px;background:#a3d300">107</div>
<div class="c" style="left:223.00px;top:271.60px;width:26.50px;height:12.50px;line-height:12.50px;background:#77ee11">120</div>
<div class="c" style="left:251.00px;top:271.60px;width:26.50px;height:12.50px;line-height:12.50px;background:#77ee11">120</div>
<div class="c" style="left:21.50px;top:285.60px;width:26.50px;height:12.50px;line-height:12.50px;background:#e39406">100</div>
<div class="c" style="left:55.00px;top:285.60px;width:26.50px;height:12.50px;line-height:12.50px;background:#dd9900">90</div>
<div class="c" style="left:83.00px;top:285.60px;width:26.50px;height:12.50px;line-height:12.50px;background:#dd9900">90</div>
<div class="c" style="left:111.00px;top:285.60px;width:26.50px;height:12.50px;line-height:12.50px;background:#da9f00">91</div>
<div class="c" style="left:139.00px;top:285.60px;width:26.50px;height:12.50px;line-height:12.50px;background:#c8bb00">97</div>
<div class="c" style="left:167.00px;top:285.60px;width:26.50px;height:12.50px;line-height:12.50px;background:#b1c500">103</div>
<div class="c" style="left:195.00px;top:285.60px;width:26.50px;height:12.50px;line-height:12.50px;background:#92e003">112</div>
<div class="c" style="left:223.00px;top:285.60px;width:26.50px;height:12.50px;line-height:12.50px;background:#77ee11">120</div>
<div class="c" style="left:251.00px;top:285.60px;width:26.50px;height:12.50px;line-height:12.50px;background:#77ee11">120</div>
<div class="c" style="left:21.50px;top:299.60px;width:26.50px;height:12.50px;line-height:12.50px;background:#d7a500">106</div>
<div class="c" style="left:55.00px;top:299.60px;width:26.50px;height:12.50px;line-height:12.50px;background:#d7a400">92</div>
<div class="c" style="left:83.00px;top:299.60px;width:26.50px;height:12.50px;line-height:12.50px;background:#d4aa00">93</div>
<div class="c" style="left:111.00px;top:299.60px;width:26.50px;height:12.50px;line-height:12.50px;background:#d2b000">94</div>
<div class="c" style="left:139.00px;top:299.60px;width:26.50px;height:12.50px;line-height:12.50px;background:#b4c200">102</div>
<div class="c" style="left:167.00px;top:299.60px;width:26.50px;height:12.50px;line-height:12.50px;background:#77ee11">120</div>
<div class="c" style="left:195.00px;top:299.60px;width:26.50px;height:12.50px;line-height:12.50px;background:#77ee11">120</div>
<div class="c" style="left:223.00px;top:299.60px;width:26.50px;height:12.50px;line-height:12.50px;background:#77ee11">120</div>
<div class="c" style="left:251.00px;top:299.60px;width:26.50px;height:12.50px;line-height:12.50px;background:#77ee11">120</div>
<div class="c" style="left:21.50px;top:313.60px;width:26.50px;height:12.50px;line-height:12.50px;background:#c6bb00">112</div>
<div class="c" style="left:55.00px;top:313.60px;width:26.50px;height:12.50px;line-height:12.50px;background:#cfb500">95</div>
<div class="c" style="left:83.00px;top:313.60px;width:26.50px;height:12.50px;line-height:12.50px;background:#cfb500">95</div>
<div class="c" style="left:111.00px;top:313.60px;width:26.50px;height:12.50px;line-height:12.50px;background:#c4bb00">98</div>
<div class="c" style="left:139.00px;top:313.60px;width:26.50px;height:12.50px;line-height:12.50px;background:#a0d600">108</div>
<div class="c" style="left:167.00px;top:313.60px;width:26.50px;height:12.50px;line-height:12.50px;background:#77ee11">120</div>
<div class="c" style="left:195.00px;top:313.60px;width:26.50px;height:12.50px;line-height:12.50px;background:#77ee11">120</div>
<div class="c" style="left:223.00px;top:313.60px;width:26.50px;height:12.50px;line-height:12.50px;background:#77ee11">120</div>
<div class="c" style="left:251.00px;top:313.60px;width:26.50px;height:12.50px;line-height:12.50px;background:#77ee11">120</div>
<div class="c" style="left:21.50px;top:327.60px;width:26.50px;height:12.50px;line-height:12.50px;background:#afc700">119</div>
<div class="c" style="left:55.00px;top:327.60px;width:26.50px;height:12.50px;line-height:12.50px;background:#c8bb00">97</div>
<div class="c" style="left:83.00px;top:327.60px;width:26.50px;height:12.50px;line-height:12.50px;background:#c4bb00">98</div>
<div class="c" style="left:111.00px;top:327.60px;width:26.50px;height:12.50px;line-height:12.50px;background:#b1c500">103</div>
<div class="c" style="left:139.00px;top:327.60px;width:26.50px;height:12.50px;line-height:12.50px;background:#96df02">111</div>
<div class="c" style="left:167.00px;top:327.60px;width:26.50px;height:12.50px;line-height:12.50px;background:#77ee11">120</div>
<div class="c" style="left:195.00px;top:327.60px;width:26.50px;height:12.50px;line-height:12.50px;background:#77ee11">120</div>
<div class="c" style="left:223.00px;top:327.60px;width:26.50px;height:12.50px;line-height:12.50px;background:#77ee11">120</div>
<div class="c" style="left:251.00px;top:327.60px;width:26.50px;height:12.50px;line-height:12.50px;background:#77ee11">120</div>
<div class="c" style="left:21.50px;top:341.60px;width:26.50px;height:12.50px;line-height:12.50px;background:#9dd900">125</div>
<div class="c" style="left:55.00px;top:341.60px;width:26.50px;height:12.50px;line-height:12.50px;background:#bfbb00">99</div>
<div class="c" style="left:83.00px;top:341.60px;width:26.50px;height:12.50px;line-height:12.50px;background:#bbbb00">100</div>
<div class="c" style="left:111.00px;top:341.60px;width:26.50px;height:12.50px;line-height:12.50px;background:#99dd00">110</div>
<div class="c" style="left:139.00px;top:341.60px;width:26.50px;height:12.50px;line-height:12.50px;background:#8fe205">113</div>
<div class="c" style="left:167.00px;top:341.60px;width:26.50px;height:12.50px;line-height:12.50px;background:#77ee11">120</div>
<div class="c" style="left:195.00px;top:341.60px;width:26.50px;height:12.50px;line-height:12.50px;background:#77ee11">120</div>
<div class="c" style="left:223.00px;top:341.60px;width:26.50px;height:12.50px;line-height:12.50px;background:#77ee11">120</div>
<div class="c" style="left:251.00px;top:341.60px;width:26.50px;height:12.50px;line-height:12.50px;background:#77ee11">120</div>
<div class="c" style="left:21.50px;top:355.60px;width:26.50px;height:12.50px;line-height:12.50px;background:#8ce407">131</div>
<div class="c" style="left:55.00px;top:355.60px;width:26.50px;height:12.50px;line-height:12.50px;background:#b1c500">103</div>
<div class="c" style="left:83.00px;top:355.60px;width:26.50px;height:12.50px;line-height:12.50px;background:#aacc00">105</div>
<div class="c" style="left:111.00px;top:355.60px;width:26.50px;height:12.50px;line-height:12.50px;background:#77ee11">120</div>
<div class="c" style="left:139.00px;top:355.60px;width:26.50px;height:12.50px;line-height:12.50px;background:#77ee11">120</div>
<div class="c" style="left:167.00px;top:355.60px;width:26.50px;height:12.50px;line-height:12.50px;background:#77ee11">120</div>
<div class="c" style="left:195.00px;top:355.60px;width:26.50px;height:12.50px;line-height:12.50px;background:#77ee11">120</div>
<div class="c" style="left:223.00px;top:355.60px;width:26.50px;height:12.50px;line-height:12.50px;background:#77ee11">120</div>
<div class="c" style="left:251.00px;top:355.60px;width:26.50px;height:12.50px;line-height:12.50px;background:#77ee11">120</div>
<div class="c" style="left:21.50px;top:369.60px;width:26.50px;height:12.50px;line-height:12.50px;background:#77ee11">138</div>
<div class="c" style="left:55.00px;top:369.60px;width:26.50px;height:12.50px;line-height:12.50px;background:#a7cf00">106</div>
<div class="c" style="left:83.00px;top:369.60px;width:26.50px;height:12.50px;line-height:12.50px;background:#9cda00">109</div>
<div class="c" style="left:111.00px;top:369.60px;width:26.50px;height:12.50px;line-height:12.50px;background:#77ee11">120</div>
<div class="c" style="left:139.00px;top:369.60px;width:26.50px;height:12.50px;line-height:12.50px;background:#77ee11">120</div>
<div class="c" style="left:167.00px;top:369.60px;width:26.50px;height:12.50px;line-height:12.50px;background:#77ee11">120</div>
<div class="c" style="left:195.00px;top:369.60px;width:26.50px;height:12.50px;line-height:12.50px;background:#77ee11">120</div>
<div class="c" style="left:223.00px;top:369.60px;width:26.50px;height:12.50px;line-height:12.50px;background:#77ee11">120</div>
<div class="c" style="left:251.00px;top:369.60px;width:26.50px;height:12.50px;line-height:12.50px;background:#77ee11">120</div>
<div class="c" style="left:21.50px;top:383.60px;width:26.50px;height:12.50px;line-height:12.50px;background:#65ee1a">144</div>
<div class="c" style="left:55.00px;top:383.60px;width:26.50px;height:12.50px;line-height:12.50px;background:#9cda00">109</div>
<div class="c" style="left:83.00px;top:383.60px;width:26.50px;height:12.50px;line-height:12.50px;background:#88e608">115</div>
<div class="c" style="left:111.00px;top:383.60px;width:26.50px;height:12.50px;line-height:12.50px;background:#77ee11">120</div>
<div class="c" style="left:139.00px;top:383.60px;width:26.50px;height:12.50px;line-height:12.50px;background:#77ee11">120</div>
<div class="c" style="left:167.00px;top:383.60px;width:26.50px;height:12.50px;line-height:12.50px;background:#77ee11">120</div>
<div class="c" style="left:195.00px;top:383.60px;width:26.50px;height:12.50px;line-height:12.50px;background:#77ee11">120</div>
<div class="c" style="left:223.00px;top:383.60px;width:26.50px;height:12.50px;line-height:12.50px;background:#77ee11">120</div>
<div class="c" style="left:251.00px;top:383.60px;width:26.50px;height:12.50px;line-height:12.50px;background:#77ee11">120</div>
<div class="c" style="left:21.50px;top:397.60px;width:26.50px;height:12.50px;line-height:12.50px;background:#53ee24">150</div>
<div class="c" style="left:55.00px;top:397.60px;width:26.50px;height:12.50px;line-height:12.50px;background:#8be407">114</div>
<div class="c" style="left:83.00px;top:397.60px;width:26.50px;height:12.50px;line-height:12.50px;background:#77ee11">120</div>
<div class="c" style="left:111.00px;top:397.60px;width:26.50px;height:12.50px;line-height:12.50px;background:#77ee11">120</div>
<div class="c" style="left:139.00px;top:397.60px;width:26.50px;height:12.50px;line-height:12.50px;background:#77ee11">120</div>
<div class="c" style="left:167.00px;top:397.60px;width:26.50px;height:12.50px;line-height:12.50px;background:#77ee11">120</div>
<div class="c" style="left:195.00px;top:397.60px;width:26.50px;height:12.50px;line-height:12.50px;background:#77ee11">120</div>
<div class="c" style="left:223.00px;top:397.60px;width:26.50px;height:12.50px;line-height:12.50px;background:#77ee11">120</div>
<div class="c" style="left:251.00px;top:397.60px;width:26.50px;height:12.50px;line-height:12.50px;background:#77ee11">120</div>
<div class="c" style="left:21.50px;top:411.60px;width:26.50px;height:12.50px;line-height:12.50px;background:#3fee38">156</div>
<div class="c" style="left:55.00px;top:411.60px;width:26.50px;height:12.50px;line-height:12.50px;background:#77ee11">120</div>
<div class="c" style="left:83.00px;top:411.60px;width:26.50px;height:12.50px;line-height:12.50px;background:#77ee11">120</div>
<div class="c" style="left:111.00px;top:411.60px;width:26.50px;height:12.50px;line-height:12.50px;background:#77ee11">120</div>
<div class="c" style="left:139.00px;top:411.60px;width:26.50px;height:12.50px;line-height:12.50px;background:#77ee11">120</div>
<div class="c" style="left:167.00px;top:411.60px;width:26.50px;height:12.50px;line-height:12.50px;background:#77ee11">120</div>
<div class="c" style="left:195.00px;top:411.60px;width:26.50px;height:12.50px;line-height:12.50px;background:#77ee11">120</div>
<div class="c" style="left:223.00px;top:411.60px;width:26.50px;height:12.50px;line-height:12.50px;background:#77ee11">120</div>
<div class="c" style="left:251.00px;top:411.60px;width:26.50px;height:12.50px;line-height:12.50px;background:#77ee11">120</div>
<div class="c" style="left:21.50px;top:425.60px;width:26.50px;height:12.50px;line-height:12.50px;background:#2cee4b">162</div>
<div class="c" style="left:55.00px;top:425.60px;width:26.50px;height:12.50px;line-height:12.50px;background:#77ee11">120</div>
<div class="c" style="left:83.00px;top:425.60px;width:26.50px;height:12.50px;line-height:12.50px;background:#77ee11">120</div>
<div class="c" style="left:111.00px;top:425.60px;width:26.50px;height:12.50px;line-height:12.50px;background:#77ee11">120</div>
<div class="c" style="left:139.00px;top:425.60px;width:26.50px;height:12.50px;line-height:12.50px;background:#77ee11">120</div>
<div class="c" style="left:167.00px;top:425.60px;width:26.50px;height:12.50px;line-height:12.50px;background:#77ee11">120</div>
<div class="c" style="left:195.00px;top:425.60px;width:26.50px;height:12.50px;line-height:12.50px;background:#77ee11">120</div>
<div class="c" style="left:223.00px;top:425.60px;width:26.50px;height:12.50px;line-height:12.50px;background:#77ee11">120</div>
<div class="c" style="left:251.00px;top:425.60px;width:26.50px;height:12.50px;line-height:12.50px;background:#77ee11">120</div>
<div class="gbar" style="left:52.80px;top:443.60px;width:225.80px;height:12.00px;line-height:12.00px">Steps</div>
</div></div>
<div class="win" style="left:621.90px;top:250.30px;width:302.80px;height:600.00px;">
<div class="t" style="left:6px;top:3.6px;font-size:12px;line-height:16px;color:#1b2530;white-space:nowrap">Idle Stepper Look-up Table-read image111.hex.bin</div>
<div class="cbtn" style="left:280.00px;top:4.5px;width:16px;height:16px"><div class="cx"></div></div>
<div class="cont" style="left:5px;top:23px;width:291.80px;height:572.00px">
<div class="t" style="left:10.00px;top:2.5px;font-size:11.8px;line-height:16px;color:#1a1a1a"><u>E</u>dit</div>
<div class="t" style="left:44.00px;top:2.5px;font-size:11.8px;line-height:16px;color:#1a1a1a"><u>V</u>iew</div>
<div class="t" style="left:82.60px;top:2.5px;font-size:11.8px;line-height:16px;color:#1a1a1a"><u>H</u>elp</div>
<div style="left:0;top:19px;width:291.80px;height:1px;background:#dedbd5"></div>
<div class="gbar" style="left:52.80px;top:23.00px;width:225.80px;height:12.00px;line-height:12.00px">Coolant Temperature (Celsius)</div>
<div style="left:54.00px;top:40.00px;width:225.00px;height:14px;background:#e6e3de"></div>
<div class="c" style="left:55.00px;top:41.00px;width:27.00px;height:12.00px;line-height:12.00px;background:#9b00dc">-32</div>
<div class="c" style="left:83.00px;top:41.00px;width:27.00px;height:12.00px;line-height:12.00px;background:#df00a7">-8</div>
<div class="c" style="left:111.00px;top:41.00px;width:27.00px;height:12.00px;line-height:12.00px;background:#fd0f6b">7</div>
<div class="c" style="left:139.00px;top:41.00px;width:27.00px;height:12.00px;line-height:12.00px;background:#ff1d5a">13</div>
<div class="c" style="left:167.00px;top:41.00px;width:27.00px;height:12.00px;line-height:12.00px;background:#ff3245">20</div>
<div class="c" style="left:195.00px;top:41.00px;width:27.00px;height:12.00px;line-height:12.00px;background:#ff4334">27</div>
<div class="c" style="left:223.00px;top:41.00px;width:27.00px;height:12.00px;line-height:12.00px;background:#fa5c21">34</div>
<div class="c" style="left:251.00px;top:41.00px;width:27.00px;height:12.00px;line-height:12.00px;background:#f87515">41</div>
<div class="gbar" style="left:3.00px;top:61.00px;width:11.30px;height:377.00px"><div class="vt" style="left:5.65px;top:188.50px">LOAD (%)</div></div>
<div style="left:20.50px;top:60.60px;width:27px;height:379.00px;background:#e6e3de"></div>
<div style="left:54.00px;top:60.60px;width:225.00px;height:379.00px;background:#dad6d2"></div>
<div class="c" style="left:21.50px;top:61.60px;width:26.50px;height:12.50px;line-height:12.50px;background:#8a00ea">0</div>
<div class="c sel" style="left:55.00px;top:61.60px;width:26.50px;height:12.50px;line-height:12.50px">0</div>
<div class="c" style="left:83.00px;top:61.60px;width:26.50px;height:12.50px;line-height:12.50px;background:#8a00ea">0</div>
<div class="c" style="left:111.00px;top:61.60px;width:26.50px;height:12.50px;line-height:12.50px;background:#8a00ea">0</div>
<div class="c" style="left:139.00px;top:61.60px;width:26.50px;height:12.50px;line-height:12.50px;background:#8a00ea">0</div>
<div class="c" style="left:167.00px;top:61.60px;width:26.50px;height:12.50px;line-height:12.50px;background:#8a00ea">0</div>
<div class="c" style="left:195.00px;top:61.60px;width:26.50px;height:12.50px;line-height:12.50px;background:#8a00ea">0</div>
<div class="c" style="left:223.00px;top:61.60px;width:26.50px;height:12.50px;line-height:12.50px;background:#8a00ea">0</div>
<div class="c" style="left:251.00px;top:61.60px;width:26.50px;height:12.50px;line-height:12.50px;background:#8a00ea">0</div>
<div class="c" style="left:21.50px;top:75.60px;width:26.50px;height:12.50px;line-height:12.50px;background:#9600e0">6</div>
<div class="c" style="left:55.00px;top:75.60px;width:26.50px;height:12.50px;line-height:12.50px;background:#bb00cc">20</div>
<div class="c" style="left:83.00px;top:75.60px;width:26.50px;height:12.50px;line-height:12.50px;background:#b300d0">17</div>
<div class="c" style="left:111.00px;top:75.60px;width:26.50px;height:12.50px;line-height:12.50px;background:#b100d1">16</div>
<div class="c" style="left:139.00px;top:75.60px;width:26.50px;height:12.50px;line-height:12.50px;background:#ae00d2">15</div>
<div class="c" style="left:167.00px;top:75.60px;width:26.50px;height:12.50px;line-height:12.50px;background:#ac00d4">14</div>
<div class="c" style="left:195.00px;top:75.60px;width:26.50px;height:12.50px;line-height:12.50px;background:#ac00d4">14</div>
<div class="c" style="left:223.00px;top:75.60px;width:26.50px;height:12.50px;line-height:12.50px;background:#a900d5">13</div>
<div class="c" style="left:251.00px;top:75.60px;width:26.50px;height:12.50px;line-height:12.50px;background:#b600cf">18</div>
<div class="c" style="left:21.50px;top:89.60px;width:26.50px;height:12.50px;line-height:12.50px;background:#a300d8">12</div>
<div class="c" style="left:55.00px;top:89.60px;width:26.50px;height:12.50px;line-height:12.50px;background:#f20481">39</div>
<div class="c" style="left:83.00px;top:89.60px;width:26.50px;height:12.50px;line-height:12.50px;background:#e5009a">33</div>
<div class="c" style="left:111.00px;top:89.60px;width:26.50px;height:12.50px;line-height:12.50px;background:#d400b2">27</div>
<div class="c" style="left:139.00px;top:89.60px;width:26.50px;height:12.50px;line-height:12.50px;background:#d100b6">26</div>
<div class="c" style="left:167.00px;top:89.60px;width:26.50px;height:12.50px;line-height:12.50px;background:#cd00ba">25</div>
<div class="c" style="left:195.00px;top:89.60px;width:26.50px;height:12.50px;line-height:12.50px;background:#ca00bd">24</div>
<div class="c" style="left:223.00px;top:89.60px;width:26.50px;height:12.50px;line-height:12.50px;background:#c600c1">23</div>
<div class="c" style="left:251.00px;top:89.60px;width:26.50px;height:12.50px;line-height:12.50px;background:#d800af">28</div>
<div class="c" style="left:21.50px;top:103.60px;width:26.50px;height:12.50px;line-height:12.50px;background:#b200d0">19</div>
<div class="c" style="left:55.00px;top:103.60px;width:26.50px;height:12.50px;line-height:12.50px;background:#ff3443">57</div>
<div class="c" style="left:83.00px;top:103.60px;width:26.50px;height:12.50px;line-height:12.50px;background:#fa0c70">43</div>
<div class="c" style="left:111.00px;top:103.60px;width:26.50px;height:12.50px;line-height:12.50px;background:#f80a74">42</div>
<div class="c" style="left:139.00px;top:103.60px;width:26.50px;height:12.50px;line-height:12.50px;background:#f4067d">40</div>
<div class="c" style="left:167.00px;top:103.60px;width:26.50px;height:12.50px;line-height:12.50px;background:#ef0185">38</div>
<div class="c" style="left:195.00px;top:103.60px;width:26.50px;height:12.50px;line-height:12.50px;background:#ef0185">38</div>
<div class="c" style="left:223.00px;top:103.60px;width:26.50px;height:12.50px;line-height:12.50px;background:#ed0089">37</div>
<div class="c" style="left:251.00px;top:103.60px;width:26.50px;height:12.50px;line-height:12.50px;background:#f4067d">40</div>
<div class="c" style="left:21.50px;top:117.60px;width:26.50px;height:12.50px;line-height:12.50px;background:#c100c6">25</div>
<div class="c" style="left:55.00px;top:117.60px;width:26.50px;height:12.50px;line-height:12.50px;background:#ff4136">62</div>
<div class="c" style="left:83.00px;top:117.60px;width:26.50px;height:12.50px;line-height:12.50px;background:#ff3146">56</div>
<div class="c" style="left:111.00px;top:117.60px;width:26.50px;height:12.50px;line-height:12.50px;background:#ff1562">47</div>
<div class="c" style="left:139.00px;top:117.60px;width:26.50px;height:12.50px;line-height:12.50px;background:#fc0e6c">44</div>
<div class="c" style="left:167.00px;top:117.60px;width:26.50px;height:12.50px;line-height:12.50px;background:#fa0c70">43</div>
<div class="c" style="left:195.00px;top:117.60px;width:26.50px;height:12.50px;line-height:12.50px;background:#fa0c70">43</div>
<div class="c" style="left:223.00px;top:117.60px;width:26.50px;height:12.50px;line-height:12.50px;background:#f80a74">42</div>
<div class="c" style="left:251.00px;top:117.60px;width:26.50px;height:12.50px;line-height:12.50px;background:#ff1a5d">49</div>
<div class="c" style="left:21.50px;top:131.60px;width:26.50px;height:12.50px;line-height:12.50px;background:#d400b3">31</div>
<div class="c" style="left:55.00px;top:131.60px;width:26.50px;height:12.50px;line-height:12.50px;background:#ff4631">64</div>
<div class="c" style="left:83.00px;top:131.60px;width:26.50px;height:12.50px;line-height:12.50px;background:#ff3146">56</div>
<div class="c" style="left:111.00px;top:131.60px;width:26.50px;height:12.50px;line-height:12.50px;background:#ff1d5a">50</div>
<div class="c" style="left:139.00px;top:131.60px;width:26.50px;height:12.50px;line-height:12.50px;background:#ff1a5d">49</div>
<div class="c" style="left:167.00px;top:131.60px;width:26.50px;height:12.50px;line-height:12.50px;background:#ff1562">47</div>
<div class="c" style="left:195.00px;top:131.60px;width:26.50px;height:12.50px;line-height:12.50px;background:#ff1364">46</div>
<div class="c" style="left:223.00px;top:131.60px;width:26.50px;height:12.50px;line-height:12.50px;background:#fc0e6c">44</div>
<div class="c" style="left:251.00px;top:131.60px;width:26.50px;height:12.50px;line-height:12.50px;background:#ff3146">56</div>
<div class="c" style="left:21.50px;top:145.60px;width:26.50px;height:12.50px;line-height:12.50px;background:#e5009a">38</div>
<div class="c" style="left:55.00px;top:145.60px;width:26.50px;height:12.50px;line-height:12.50px;background:#ff5126">67</div>
<div class="c" style="left:83.00px;top:145.60px;width:26.50px;height:12.50px;line-height:12.50px;background:#ff4631">64</div>
<div class="c" style="left:111.00px;top:145.60px;width:26.50px;height:12.50px;line-height:12.50px;background:#ff393e">59</div>
<div class="c" style="left:139.00px;top:145.60px;width:26.50px;height:12.50px;line-height:12.50px;background:#ff2d4a">55</div>
<div class="c" style="left:167.00px;top:145.60px;width:26.50px;height:12.50px;line-height:12.50px;background:#ff2651">53</div>
<div class="c" style="left:195.00px;top:145.60px;width:26.50px;height:12.50px;line-height:12.50px;background:#ff1d5a">50</div>
<div class="c" style="left:223.00px;top:145.60px;width:26.50px;height:12.50px;line-height:12.50px;background:#ff1a5d">49</div>
<div class="c" style="left:251.00px;top:145.60px;width:26.50px;height:12.50px;line-height:12.50px;background:#ff3c3c">60</div>
<div class="c" style="left:21.50px;top:159.60px;width:26.50px;height:12.50px;line-height:12.50px;background:#f00284">44</div>
<div class="c" style="left:55.00px;top:159.60px;width:26.50px;height:12.50px;line-height:12.50px;background:#fc5922">69</div>
<div class="c" style="left:83.00px;top:159.60px;width:26.50px;height:12.50px;line-height:12.50px;background:#ff4e29">66</div>
<div class="c" style="left:111.00px;top:159.60px;width:26.50px;height:12.50px;line-height:12.50px;background:#ff4136">62</div>
<div class="c" style="left:139.00px;top:159.60px;width:26.50px;height:12.50px;line-height:12.50px;background:#ff3c3c">60</div>
<div class="c" style="left:167.00px;top:159.60px;width:26.50px;height:12.50px;line-height:12.50px;background:#ff3641">58</div>
<div class="c" style="left:195.00px;top:159.60px;width:26.50px;height:12.50px;line-height:12.50px;background:#ff3443">57</div>
<div class="c" style="left:223.00px;top:159.60px;width:26.50px;height:12.50px;line-height:12.50px;background:#ff3443">57</div>
<div class="c" style="left:251.00px;top:159.60px;width:26.50px;height:12.50px;line-height:12.50px;background:#ff5126">67</div>
<div class="c" style="left:21.50px;top:173.60px;width:26.50px;height:12.50px;line-height:12.50px;background:#fb0d6e">50</div>
<div class="c" style="left:55.00px;top:173.60px;width:26.50px;height:12.50px;line-height:12.50px;background:#f76220">71</div>
<div class="c" style="left:83.00px;top:173.60px;width:26.50px;height:12.50px;line-height:12.50px;background:#fc5922">69</div>
<div class="c" style="left:111.00px;top:173.60px;width:26.50px;height:12.50px;line-height:12.50px;background:#ff5126">67</div>
<div class="c" style="left:139.00px;top:173.60px;width:26.50px;height:12.50px;line-height:12.50px;background:#ff4a2d">65</div>
<div class="c" style="left:167.00px;top:173.60px;width:26.50px;height:12.50px;line-height:12.50px;background:#ff4334">63</div>
<div class="c" style="left:195.00px;top:173.60px;width:26.50px;height:12.50px;line-height:12.50px;background:#ff393e">59</div>
<div class="c" style="left:223.00px;top:173.60px;width:26.50px;height:12.50px;line-height:12.50px;background:#ff4136">62</div>
<div class="c" style="left:251.00px;top:173.60px;width:26.50px;height:12.50px;line-height:12.50px;background:#f46620">72</div>
<div class="c" style="left:21.50px;top:187.60px;width:26.50px;height:12.50px;line-height:12.50px;background:#ff1a5d">56</div>
<div class="c" style="left:55.00px;top:187.60px;width:26.50px;height:12.50px;line-height:12.50px;background:#f56a1d">73</div>
<div class="c" style="left:83.00px;top:187.60px;width:26.50px;height:12.50px;line-height:12.50px;background:#fc5922">69</div>
<div class="c" style="left:111.00px;top:187.60px;width:26.50px;height:12.50px;line-height:12.50px;background:#ff4e29">66</div>
<div class="c" style="left:139.00px;top:187.60px;width:26.50px;height:12.50px;line-height:12.50px;background:#ff4631">64</div>
<div class="c" style="left:167.00px;top:187.60px;width:26.50px;height:12.50px;line-height:12.50px;background:#ff4136">62</div>
<div class="c" style="left:195.00px;top:187.60px;width:26.50px;height:12.50px;line-height:12.50px;background:#ff3c3c">60</div>
<div class="c" style="left:223.00px;top:187.60px;width:26.50px;height:12.50px;line-height:12.50px;background:#ff4631">64</div>
<div class="c" style="left:251.00px;top:187.60px;width:26.50px;height:12.50px;line-height:12.50px;background:#f77516">76</div>
<div class="c" style="left:21.50px;top:201.60px;width:26.50px;height:12.50px;line-height:12.50px;background:#ff294e">62</div>
<div class="c" style="left:55.00px;top:201.60px;width:26.50px;height:12.50px;line-height:12.50px;background:#f77516">76</div>
<div class="c" style="left:83.00px;top:201.60px;width:26.50px;height:12.50px;line-height:12.50px;background:#f66d1b">74</div>
<div class="c" style="left:111.00px;top:201.60px;width:26.50px;height:12.50px;line-height:12.50px;background:#f46620">72</div>
<div class="c" style="left:139.00px;top:201.60px;width:26.50px;height:12.50px;line-height:12.50px;background:#fa5e21">70</div>
<div class="c" style="left:167.00px;top:201.60px;width:26.50px;height:12.50px;line-height:12.50px;background:#fc5922">69</div>
<div class="c" style="left:195.00px;top:201.60px;width:26.50px;height:12.50px;line-height:12.50px;background:#ff5126">67</div>
<div class="c" style="left:223.00px;top:201.60px;width:26.50px;height:12.50px;line-height:12.50px;background:#fc5922">69</div>
<div class="c" style="left:251.00px;top:201.60px;width:26.50px;height:12.50px;line-height:12.50px;background:#f38212">79</div>
<div class="c" style="left:21.50px;top:215.60px;width:26.50px;height:12.50px;line-height:12.50px;background:#ff3c3c">69</div>
<div class="c" style="left:55.00px;top:215.60px;width:26.50px;height:12.50px;line-height:12.50px;background:#f77914">77</div>
<div class="c" style="left:83.00px;top:215.60px;width:26.50px;height:12.50px;line-height:12.50px;background:#f77118">75</div>
<div class="c" style="left:111.00px;top:215.60px;width:26.50px;height:12.50px;line-height:12.50px;background:#f56a1d">73</div>
<div class="c" style="left:139.00px;top:215.60px;width:26.50px;height:12.50px;line-height:12.50px;background:#f46620">72</div>
<div class="c" style="left:167.00px;top:215.60px;width:26.50px;height:12.50px;line-height:12.50px;background:#fa5e21">70</div>
<div class="c" style="left:195.00px;top:215.60px;width:26.50px;height:12.50px;line-height:12.50px;background:#f76220">71</div>
<div class="c" style="left:223.00px;top:215.60px;width:26.50px;height:12.50px;line-height:12.50px;background:#f77118">75</div>
<div class="c" style="left:251.00px;top:215.60px;width:26.50px;height:12.50px;line-height:12.50px;background:#e9900b">84</div>
<div class="c" style="left:21.50px;top:229.60px;width:26.50px;height:12.50px;line-height:12.50px;background:#ff4b2c">75</div>
<div class="c" style="left:55.00px;top:229.60px;width:26.50px;height:12.50px;line-height:12.50px;background:#f38212">79</div>
<div class="c" style="left:83.00px;top:229.60px;width:26.50px;height:12.50px;line-height:12.50px;background:#f77914">77</div>
<div class="c" style="left:111.00px;top:229.60px;width:26.50px;height:12.50px;line-height:12.50px;background:#f77118">75</div>
<div class="c" style="left:139.00px;top:229.60px;width:26.50px;height:12.50px;line-height:12.50px;background:#f56a1d">73</div>
<div class="c" style="left:167.00px;top:229.60px;width:26.50px;height:12.50px;line-height:12.50px;background:#f76220">71</div>
<div class="c" style="left:195.00px;top:229.60px;width:26.50px;height:12.50px;line-height:12.50px;background:#f66d1b">74</div>
<div class="c" style="left:223.00px;top:229.60px;width:26.50px;height:12.50px;line-height:12.50px;background:#f18611">80</div>
<div class="c" style="left:251.00px;top:229.60px;width:26.50px;height:12.50px;line-height:12.50px;background:#d2b000">94</div>
<div class="c" style="left:21.50px;top:243.60px;width:26.50px;height:12.50px;line-height:12.50px;background:#f85f21">81</div>
<div class="c" style="left:55.00px;top:243.60px;width:26.50px;height:12.50px;line-height:12.50px;background:#ed8d0f">82</div>
<div class="c" style="left:83.00px;top:243.60px;width:26.50px;height:12.50px;line-height:12.50px;background:#ef8b10">81</div>
<div class="c" style="left:111.00px;top:243.60px;width:26.50px;height:12.50px;line-height:12.50px;background:#f18611">80</div>
<div class="c" style="left:139.00px;top:243.60px;width:26.50px;height:12.50px;line-height:12.50px;background:#f38212">79</div>
<div class="c" style="left:167.00px;top:243.60px;width:26.50px;height:12.50px;line-height:12.50px;background:#f57d13">78</div>
<div class="c" style="left:195.00px;top:243.60px;width:26.50px;height:12.50px;line-height:12.50px;background:#e79209">85</div>
<div class="c" style="left:223.00px;top:243.60px;width:26.50px;height:12.50px;line-height:12.50px;background:#bfbb00">99</div>
<div class="c" style="left:251.00px;top:243.60px;width:26.50px;height:12.50px;line-height:12.50px;background:#b4c200">102</div>
<div class="c" style="left:21.50px;top:257.60px;width:26.50px;height:12.50px;line-height:12.50px;background:#f87614">88</div>
<div class="c" style="left:55.00px;top:257.60px;width:26.50px;height:12.50px;line-height:12.50px;background:#e59307">86</div>
<div class="c" style="left:83.00px;top:257.60px;width:26.50px;height:12.50px;line-height:12.50px;background:#e59307">86</div>
<div class="c" style="left:111.00px;top:257.60px;width:26.50px;height:12.50px;line-height:12.50px;background:#e59307">86</div>
<div class="c" style="left:139.00px;top:257.60px;width:26.50px;height:12.50px;line-height:12.50px;background:#e39406">87</div>
<div class="c" style="left:167.00px;top:257.60px;width:26.50px;height:12.50px;line-height:12.50px;background:#e19604">88</div>
<div class="c" style="left:195.00px;top:257.60px;width:26.50px;height:12.50px;line-height:12.50px;background:#adc900">104</div>
<div class="c" style="left:223.00px;top:257.60px;width:26.50px;height:12.50px;line-height:12.50px;background:#77ee11">120</div>
<div class="c" style="left:251.00px;top:257.60px;width:26.50px;height:12.50px;line-height:12.50px;background:#77ee11">120</div>
<div class="c" style="left:21.50px;top:271.60px;width:26.50px;height:12.50px;line-height:12.50px;background:#ed8d0f">94</div>
<div class="c" style="left:55.00px;top:271.60px;width:26.50px;height:12.50px;line-height:12.50px;background:#e19604">88</div>
<div class="c" style="left:83.00px;top:271.60px;width:26.50px;height:12.50px;line-height:12.50px;background:#e19604">88</div>
<div class="c" style="left:111.00px;top:271.60px;width:26.50px;height:12.50px;line-height:12.50px;background:#e19604">88</div>
<div class="c" style="left:139.00px;top:271.60px;width:26.50px;height:12.50px;line-height:12.50px;background:#da9f00">91</div>
<div class="c" style="left:167.00px;top:271.60px;width:26.50px;height:12.50px;line-height:12.50px;background:#d2b000">94</div>
<div class="c" style="left:195.00px;top:271.60px;width:26.50px;height:12.50px;line-height:12.50px;background:#a3d300">107</div>
<div class="c" style="left:223.00px;top:271.60px;width:26.50px;height:12.50px;line-height:12.50px;background:#77ee11">120</div>
<div class="c" style="left:251.00px;top:271.60px;width:26.50px;height:12.50px;line-height:12.50px;background:#77ee11">120</div>
<div class="c" style="left:21.50px;top:285.60px;width:26.50px;height:12.50px;line-height:12.50px;background:#e39406">100</div>
<div class="c" style="left:55.00px;top:285.60px;width:26.50px;height:12.50px;line-height:12.50px;background:#dd9900">90</div>
<div class="c" style="left:83.00px;top:285.60px;width:26.50px;height:12.50px;line-height:12.50px;background:#dd9900">90</div>
<div class="c" style="left:111.00px;top:285.60px;width:26.50px;height:12.50px;line-height:12.50px;background:#da9f00">91</div>
<div class="c" style="left:139.00px;top:285.60px;width:26.50px;height:12.50px;line-height:12.50px;background:#c8bb00">97</div>
<div class="c" style="left:167.00px;top:285.60px;width:26.50px;height:12.50px;line-height:12.50px;background:#b1c500">103</div>
<div class="c" style="left:195.00px;top:285.60px;width:26.50px;height:12.50px;line-height:12.50px;background:#92e003">112</div>
<div class="c" style="left:223.00px;top:285.60px;width:26.50px;height:12.50px;line-height:12.50px;background:#77ee11">120</div>
<div class="c" style="left:251.00px;top:285.60px;width:26.50px;height:12.50px;line-height:12.50px;background:#77ee11">120</div>
<div class="c" style="left:21.50px;top:299.60px;width:26.50px;height:12.50px;line-height:12.50px;background:#d7a500">106</div>
<div class="c" style="left:55.00px;top:299.60px;width:26.50px;height:12.50px;line-height:12.50px;background:#d7a400">92</div>
<div class="c" style="left:83.00px;top:299.60px;width:26.50px;height:12.50px;line-height:12.50px;background:#d4aa00">93</div>
<div class="c" style="left:111.00px;top:299.60px;width:26.50px;height:12.50px;line-height:12.50px;background:#d2b000">94</div>
<div class="c" style="left:139.00px;top:299.60px;width:26.50px;height:12.50px;line-height:12.50px;background:#b4c200">102</div>
<div class="c" style="left:167.00px;top:299.60px;width:26.50px;height:12.50px;line-height:12.50px;background:#77ee11">120</div>
<div class="c" style="left:195.00px;top:299.60px;width:26.50px;height:12.50px;line-height:12.50px;background:#77ee11">120</div>
<div class="c" style="left:223.00px;top:299.60px;width:26.50px;height:12.50px;line-height:12.50px;background:#77ee11">120</div>
<div class="c" style="left:251.00px;top:299.60px;width:26.50px;height:12.50px;line-height:12.50px;background:#77ee11">120</div>
<div class="c" style="left:21.50px;top:313.60px;width:26.50px;height:12.50px;line-height:12.50px;background:#c6bb00">112</div>
<div class="c" style="left:55.00px;top:313.60px;width:26.50px;height:12.50px;line-height:12.50px;background:#cfb500">95</div>
<div class="c" style="left:83.00px;top:313.60px;width:26.50px;height:12.50px;line-height:12.50px;background:#cfb500">95</div>
<div class="c" style="left:111.00px;top:313.60px;width:26.50px;height:12.50px;line-height:12.50px;background:#c4bb00">98</div>
<div class="c" style="left:139.00px;top:313.60px;width:26.50px;height:12.50px;line-height:12.50px;background:#a0d600">108</div>
<div class="c" style="left:167.00px;top:313.60px;width:26.50px;height:12.50px;line-height:12.50px;background:#77ee11">120</div>
<div class="c" style="left:195.00px;top:313.60px;width:26.50px;height:12.50px;line-height:12.50px;background:#77ee11">120</div>
<div class="c" style="left:223.00px;top:313.60px;width:26.50px;height:12.50px;line-height:12.50px;background:#77ee11">120</div>
<div class="c" style="left:251.00px;top:313.60px;width:26.50px;height:12.50px;line-height:12.50px;background:#77ee11">120</div>
<div class="c" style="left:21.50px;top:327.60px;width:26.50px;height:12.50px;line-height:12.50px;background:#afc700">119</div>
<div class="c" style="left:55.00px;top:327.60px;width:26.50px;height:12.50px;line-height:12.50px;background:#c8bb00">97</div>
<div class="c" style="left:83.00px;top:327.60px;width:26.50px;height:12.50px;line-height:12.50px;background:#c4bb00">98</div>
<div class="c" style="left:111.00px;top:327.60px;width:26.50px;height:12.50px;line-height:12.50px;background:#b1c500">103</div>
<div class="c" style="left:139.00px;top:327.60px;width:26.50px;height:12.50px;line-height:12.50px;background:#96df02">111</div>
<div class="c" style="left:167.00px;top:327.60px;width:26.50px;height:12.50px;line-height:12.50px;background:#77ee11">120</div>
<div class="c" style="left:195.00px;top:327.60px;width:26.50px;height:12.50px;line-height:12.50px;background:#77ee11">120</div>
<div class="c" style="left:223.00px;top:327.60px;width:26.50px;height:12.50px;line-height:12.50px;background:#77ee11">120</div>
<div class="c" style="left:251.00px;top:327.60px;width:26.50px;height:12.50px;line-height:12.50px;background:#77ee11">120</div>
<div class="c" style="left:21.50px;top:341.60px;width:26.50px;height:12.50px;line-height:12.50px;background:#9dd900">125</div>
<div class="c" style="left:55.00px;top:341.60px;width:26.50px;height:12.50px;line-height:12.50px;background:#bfbb00">99</div>
<div class="c" style="left:83.00px;top:341.60px;width:26.50px;height:12.50px;line-height:12.50px;background:#bbbb00">100</div>
<div class="c" style="left:111.00px;top:341.60px;width:26.50px;height:12.50px;line-height:12.50px;background:#99dd00">110</div>
<div class="c" style="left:139.00px;top:341.60px;width:26.50px;height:12.50px;line-height:12.50px;background:#8fe205">113</div>
<div class="c" style="left:167.00px;top:341.60px;width:26.50px;height:12.50px;line-height:12.50px;background:#77ee11">120</div>
<div class="c" style="left:195.00px;top:341.60px;width:26.50px;height:12.50px;line-height:12.50px;background:#77ee11">120</div>
<div class="c" style="left:223.00px;top:341.60px;width:26.50px;height:12.50px;line-height:12.50px;background:#77ee11">120</div>
<div class="c" style="left:251.00px;top:341.60px;width:26.50px;height:12.50px;line-height:12.50px;background:#77ee11">120</div>
<div class="c" style="left:21.50px;top:355.60px;width:26.50px;height:12.50px;line-height:12.50px;background:#8ce407">131</div>
<div class="c" style="left:55.00px;top:355.60px;width:26.50px;height:12.50px;line-height:12.50px;background:#b1c500">103</div>
<div class="c" style="left:83.00px;top:355.60px;width:26.50px;height:12.50px;line-height:12.50px;background:#aacc00">105</div>
<div class="c" style="left:111.00px;top:355.60px;width:26.50px;height:12.50px;line-height:12.50px;background:#77ee11">120</div>
<div class="c" style="left:139.00px;top:355.60px;width:26.50px;height:12.50px;line-height:12.50px;background:#77ee11">120</div>
<div class="c" style="left:167.00px;top:355.60px;width:26.50px;height:12.50px;line-height:12.50px;background:#77ee11">120</div>
<div class="c" style="left:195.00px;top:355.60px;width:26.50px;height:12.50px;line-height:12.50px;background:#77ee11">120</div>
<div class="c" style="left:223.00px;top:355.60px;width:26.50px;height:12.50px;line-height:12.50px;background:#77ee11">120</div>
<div class="c" style="left:251.00px;top:355.60px;width:26.50px;height:12.50px;line-height:12.50px;background:#77ee11">120</div>
<div class="c" style="left:21.50px;top:369.60px;width:26.50px;height:12.50px;line-height:12.50px;background:#77ee11">138</div>
<div class="c" style="left:55.00px;top:369.60px;width:26.50px;height:12.50px;line-height:12.50px;background:#a7cf00">106</div>
<div class="c" style="left:83.00px;top:369.60px;width:26.50px;height:12.50px;line-height:12.50px;background:#9cda00">109</div>
<div class="c" style="left:111.00px;top:369.60px;width:26.50px;height:12.50px;line-height:12.50px;background:#77ee11">120</div>
<div class="c" style="left:139.00px;top:369.60px;width:26.50px;height:12.50px;line-height:12.50px;background:#77ee11">120</div>
<div class="c" style="left:167.00px;top:369.60px;width:26.50px;height:12.50px;line-height:12.50px;background:#77ee11">120</div>
<div class="c" style="left:195.00px;top:369.60px;width:26.50px;height:12.50px;line-height:12.50px;background:#77ee11">120</div>
<div class="c" style="left:223.00px;top:369.60px;width:26.50px;height:12.50px;line-height:12.50px;background:#77ee11">120</div>
<div class="c" style="left:251.00px;top:369.60px;width:26.50px;height:12.50px;line-height:12.50px;background:#77ee11">120</div>
<div class="c" style="left:21.50px;top:383.60px;width:26.50px;height:12.50px;line-height:12.50px;background:#65ee1a">144</div>
<div class="c" style="left:55.00px;top:383.60px;width:26.50px;height:12.50px;line-height:12.50px;background:#9cda00">109</div>
<div class="c" style="left:83.00px;top:383.60px;width:26.50px;height:12.50px;line-height:12.50px;background:#88e608">115</div>
<div class="c" style="left:111.00px;top:383.60px;width:26.50px;height:12.50px;line-height:12.50px;background:#77ee11">120</div>
<div class="c" style="left:139.00px;top:383.60px;width:26.50px;height:12.50px;line-height:12.50px;background:#77ee11">120</div>
<div class="c" style="left:167.00px;top:383.60px;width:26.50px;height:12.50px;line-height:12.50px;background:#77ee11">120</div>
<div class="c" style="left:195.00px;top:383.60px;width:26.50px;height:12.50px;line-height:12.50px;background:#77ee11">120</div>
<div class="c" style="left:223.00px;top:383.60px;width:26.50px;height:12.50px;line-height:12.50px;background:#77ee11">120</div>
<div class="c" style="left:251.00px;top:383.60px;width:26.50px;height:12.50px;line-height:12.50px;background:#77ee11">120</div>
<div class="c" style="left:21.50px;top:397.60px;width:26.50px;height:12.50px;line-height:12.50px;background:#53ee24">150</div>
<div class="c" style="left:55.00px;top:397.60px;width:26.50px;height:12.50px;line-height:12.50px;background:#8be407">114</div>
<div class="c" style="left:83.00px;top:397.60px;width:26.50px;height:12.50px;line-height:12.50px;background:#77ee11">120</div>
<div class="c" style="left:111.00px;top:397.60px;width:26.50px;height:12.50px;line-height:12.50px;background:#77ee11">120</div>
<div class="c" style="left:139.00px;top:397.60px;width:26.50px;height:12.50px;line-height:12.50px;background:#77ee11">120</div>
<div class="c" style="left:167.00px;top:397.60px;width:26.50px;height:12.50px;line-height:12.50px;background:#77ee11">120</div>
<div class="c" style="left:195.00px;top:397.60px;width:26.50px;height:12.50px;line-height:12.50px;background:#77ee11">120</div>
<div class="c" style="left:223.00px;top:397.60px;width:26.50px;height:12.50px;line-height:12.50px;background:#77ee11">120</div>
<div class="c" style="left:251.00px;top:397.60px;width:26.50px;height:12.50px;line-height:12.50px;background:#77ee11">120</div>
<div class="c" style="left:21.50px;top:411.60px;width:26.50px;height:12.50px;line-height:12.50px;background:#3fee38">156</div>
<div class="c" style="left:55.00px;top:411.60px;width:26.50px;height:12.50px;line-height:12.50px;background:#77ee11">120</div>
<div class="c" style="left:83.00px;top:411.60px;width:26.50px;height:12.50px;line-height:12.50px;background:#77ee11">120</div>
<div class="c" style="left:111.00px;top:411.60px;width:26.50px;height:12.50px;line-height:12.50px;background:#77ee11">120</div>
<div class="c" style="left:139.00px;top:411.60px;width:26.50px;height:12.50px;line-height:12.50px;background:#77ee11">120</div>
<div class="c" style="left:167.00px;top:411.60px;width:26.50px;height:12.50px;line-height:12.50px;background:#77ee11">120</div>
<div class="c" style="left:195.00px;top:411.60px;width:26.50px;height:12.50px;line-height:12.50px;background:#77ee11">120</div>
<div class="c" style="left:223.00px;top:411.60px;width:26.50px;height:12.50px;line-height:12.50px;background:#77ee11">120</div>
<div class="c" style="left:251.00px;top:411.60px;width:26.50px;height:12.50px;line-height:12.50px;background:#77ee11">120</div>
<div class="c" style="left:21.50px;top:425.60px;width:26.50px;height:12.50px;line-height:12.50px;background:#2cee4b">162</div>
<div class="c" style="left:55.00px;top:425.60px;width:26.50px;height:12.50px;line-height:12.50px;background:#77ee11">120</div>
<div class="c" style="left:83.00px;top:425.60px;width:26.50px;height:12.50px;line-height:12.50px;background:#77ee11">120</div>
<div class="c" style="left:111.00px;top:425.60px;width:26.50px;height:12.50px;line-height:12.50px;background:#77ee11">120</div>
<div class="c" style="left:139.00px;top:425.60px;width:26.50px;height:12.50px;line-height:12.50px;background:#77ee11">120</div>
<div class="c" style="left:167.00px;top:425.60px;width:26.50px;height:12.50px;line-height:12.50px;background:#77ee11">120</div>
<div class="c" style="left:195.00px;top:425.60px;width:26.50px;height:12.50px;line-height:12.50px;background:#77ee11">120</div>
<div class="c" style="left:223.00px;top:425.60px;width:26.50px;height:12.50px;line-height:12.50px;background:#77ee11">120</div>
<div class="c" style="left:251.00px;top:425.60px;width:26.50px;height:12.50px;line-height:12.50px;background:#77ee11">120</div>
<div class="gbar" style="left:52.80px;top:443.60px;width:225.80px;height:12.00px;line-height:12.00px">Steps</div>
</div></div>
<div class="win" style="left:1081.40px;top:304.40px;width:123.80px;height:178.30px;">
<div class="t" style="left:6px;top:3.6px;font-size:12px;line-height:16px;color:#1b2530;white-space:nowrap">Desired Idle RP...</div>
<div class="cbtn" style="left:101.00px;top:4.5px;width:16px;height:16px"><div class="cx"></div></div>
<div class="cont" style="left:5px;top:23px;width:112.80px;height:150.30px">
<div class="t" style="left:10.60px;top:2.5px;font-size:11.8px;line-height:16px;color:#1a1a1a"><u>E</u>dit</div>
<div class="t" style="left:44.30px;top:2.5px;font-size:11.8px;line-height:16px;color:#1a1a1a"><u>V</u>iew</div>
<div style="left:0;top:19px;width:112.80px;height:1px;background:#dedbd5"></div>
<div class="t" style="left:97.00px;top:1px;font-size:14px;font-weight:bold;color:#222">&#187;</div>
<div class="gbar" style="left:3.40px;top:27.80px;width:12.00px;height:110.50px"><div class="vt" style="left:6.00px;top:55.25px">Engine Temp (Celsius)</div></div>
<div style="left:20.50px;top:27.30px;width:27px;height:113.00px;background:#e6e3de"></div>
<div style="left:54.60px;top:27.30px;width:34px;height:113.00px;background:#e6e3de"></div>
<div class="c" style="left:21.50px;top:28.30px;width:26.50px;height:12.50px;line-height:12.50px;background:#9b00dc">-32</div>
<div class="c sel" style="left:55.60px;top:28.30px;width:33.50px;height:12.50px;line-height:12.50px">1500</div>
<div class="c" style="left:21.50px;top:42.30px;width:26.50px;height:12.50px;line-height:12.50px;background:#df00a7">-8</div>
<div class="c" style="left:55.60px;top:42.30px;width:33.50px;height:12.50px;line-height:12.50px;background:#21eb6c">1352</div>
<div class="c" style="left:21.50px;top:56.30px;width:26.50px;height:12.50px;line-height:12.50px;background:#fd0f6b">7</div>
<div class="c" style="left:55.60px;top:56.30px;width:33.50px;height:12.50px;line-height:12.50px;background:#22ed59">1297</div>
<div class="c" style="left:21.50px;top:70.30px;width:26.50px;height:12.50px;line-height:12.50px;background:#ff3245">20</div>
<div class="c" style="left:55.60px;top:70.30px;width:33.50px;height:12.50px;line-height:12.50px;background:#3cee3b">1203</div>
<div class="c" style="left:21.50px;top:84.30px;width:26.50px;height:12.50px;line-height:12.50px;background:#fa5c21">34</div>
<div class="c" style="left:55.60px;top:84.30px;width:33.50px;height:12.50px;line-height:12.50px;background:#62ee1b">1094</div>
<div class="c" style="left:21.50px;top:98.30px;width:26.50px;height:12.50px;line-height:12.50px;background:#e7910a">50</div>
<div class="c" style="left:55.60px;top:98.30px;width:33.50px;height:12.50px;line-height:12.50px;background:#90e205">953</div>
<div class="c" style="left:21.50px;top:112.30px;width:26.50px;height:12.50px;line-height:12.50px;background:#99dd00">77</div>
<div class="c" style="left:55.60px;top:112.30px;width:33.50px;height:12.50px;line-height:12.50px;background:#d3ad00">750</div>
<div class="c" style="left:21.50px;top:126.30px;width:26.50px;height:12.50px;line-height:12.50px;background:#89e508">82</div>
<div class="c" style="left:55.60px;top:126.30px;width:33.50px;height:12.50px;line-height:12.50px;background:#d3ad00">750</div>
<div class="gbar" style="left:90.60px;top:27.80px;width:12.40px;height:110.50px"><div class="vt" style="left:6.20px;top:55.25px">RPM</div></div>
</div></div>
<div class="win" style="left:1208.20px;top:303.50px;width:123.80px;height:178.30px;">
<div class="t" style="left:6px;top:3.6px;font-size:12px;line-height:16px;color:#1b2530;white-space:nowrap">Desired Idle RP...</div>
<div class="cbtn" style="left:101.00px;top:4.5px;width:16px;height:16px"><div class="cx"></div></div>
<div class="cont" style="left:5px;top:23px;width:112.80px;height:150.30px">
<div class="t" style="left:10.60px;top:2.5px;font-size:11.8px;line-height:16px;color:#1a1a1a"><u>E</u>dit</div>
<div class="t" style="left:44.30px;top:2.5px;font-size:11.8px;line-height:16px;color:#1a1a1a"><u>V</u>iew</div>
<div style="left:0;top:19px;width:112.80px;height:1px;background:#dedbd5"></div>
<div class="t" style="left:97.00px;top:1px;font-size:14px;font-weight:bold;color:#222">&#187;</div>
<div class="gbar" style="left:3.40px;top:27.80px;width:12.00px;height:110.50px"><div class="vt" style="left:6.00px;top:55.25px">Engine Temp (Celsius)</div></div>
<div style="left:20.50px;top:27.30px;width:27px;height:113.00px;background:#e6e3de"></div>
<div style="left:54.60px;top:27.30px;width:34px;height:113.00px;background:#e6e3de"></div>
<div class="c" style="left:21.50px;top:28.30px;width:26.50px;height:12.50px;line-height:12.50px;background:#9b00dc">-32</div>
<div class="c sel" style="left:55.60px;top:28.30px;width:33.50px;height:12.50px;line-height:12.50px">1500</div>
<div class="c" style="left:21.50px;top:42.30px;width:26.50px;height:12.50px;line-height:12.50px;background:#df00a7">-8</div>
<div class="c" style="left:55.60px;top:42.30px;width:33.50px;height:12.50px;line-height:12.50px;background:#2aee4d">1258</div>
<div class="c" style="left:21.50px;top:56.30px;width:26.50px;height:12.50px;line-height:12.50px;background:#fd0f6b">7</div>
<div class="c" style="left:55.60px;top:56.30px;width:33.50px;height:12.50px;line-height:12.50px;background:#3cee3b">1203</div>
<div class="c" style="left:21.50px;top:70.30px;width:26.50px;height:12.50px;line-height:12.50px;background:#ff3245">20</div>
<div class="c" style="left:55.60px;top:70.30px;width:33.50px;height:12.50px;line-height:12.50px;background:#5eee1e">1109</div>
<div class="c" style="left:21.50px;top:84.30px;width:26.50px;height:12.50px;line-height:12.50px;background:#fa5c21">34</div>
<div class="c" style="left:55.60px;top:84.30px;width:33.50px;height:12.50px;line-height:12.50px;background:#72ee14">1047</div>
<div class="c" style="left:21.50px;top:98.30px;width:26.50px;height:12.50px;line-height:12.50px;background:#e7910a">50</div>
<div class="c" style="left:55.60px;top:98.30px;width:33.50px;height:12.50px;line-height:12.50px;background:#90e205">953</div>
<div class="c" style="left:21.50px;top:112.30px;width:26.50px;height:12.50px;line-height:12.50px;background:#99dd00">77</div>
<div class="c" style="left:55.60px;top:112.30px;width:33.50px;height:12.50px;line-height:12.50px;background:#d3ad00">750</div>
<div class="c" style="left:21.50px;top:126.30px;width:26.50px;height:12.50px;line-height:12.50px;background:#89e508">82</div>
<div class="c" style="left:55.60px;top:126.30px;width:33.50px;height:12.50px;line-height:12.50px;background:#d3ad00">750</div>
<div class="gbar" style="left:90.60px;top:27.80px;width:12.40px;height:110.50px"><div class="vt" style="left:6.20px;top:55.25px">RPM</div></div>
</div></div>
<div id="tb">
<svg width="1366" height="40" viewBox="0 0 1366 40" style="position:absolute;left:0;top:0">
<defs>
<linearGradient id="tbg" x1="0" x2="1" y1="0" y2="0">
<stop offset="0" stop-color="#92aac4"/><stop offset="0.04" stop-color="#aec8e3"/><stop offset="0.55" stop-color="#b3cfeb"/><stop offset="0.74" stop-color="#a9c3df"/><stop offset="0.82" stop-color="#90a9c4"/><stop offset="1" stop-color="#8aa3be"/>
</linearGradient>
<linearGradient id="tbv" x1="0" x2="0" y1="0" y2="1"><stop offset="0" stop-color="#fff" stop-opacity="0.18"/><stop offset="0.5" stop-color="#fff" stop-opacity="0"/><stop offset="1" stop-color="#000" stop-opacity="0.03"/></linearGradient>
<radialGradient id="orb" cx="0.5" cy="0.62" r="0.6"><stop offset="0" stop-color="#7fe0ff"/><stop offset="0.45" stop-color="#2a8fd0"/><stop offset="0.85" stop-color="#174f8c"/><stop offset="1" stop-color="#0f3460"/></radialGradient>
<linearGradient id="orbhi" x1="0" x2="0" y1="0" y2="1"><stop offset="0" stop-color="#fff" stop-opacity="0.55"/><stop offset="1" stop-color="#fff" stop-opacity="0.05"/></linearGradient>
<linearGradient id="fold" x1="0" x2="0" y1="0" y2="1"><stop offset="0" stop-color="#fcecb0"/><stop offset="1" stop-color="#efcf70"/></linearGradient>
<linearGradient id="btn" x1="0" x2="0" y1="0" y2="1"><stop offset="0" stop-color="#f2f7fc"/><stop offset="1" stop-color="#cfe0f1"/></linearGradient>
<radialGradient id="ywh" cx="0.5" cy="0.4" r="0.6"><stop offset="0" stop-color="#ffffff"/><stop offset="1" stop-color="#e2e2e2"/></radialGradient>
</defs>
<rect x="0" y="0" width="1366" height="40" fill="url(#tbg)"/>
<rect x="0" y="0" width="1366" height="40" fill="url(#tbv)"/>
<rect x="0" y="0" width="1366" height="1" fill="#8499b0"/>
<rect x="0" y="1" width="1366" height="1" fill="#d2e1f0" opacity="0.7"/>
<!-- start orb -->
<circle cx="26.7" cy="19.9" r="18" fill="#2a4d74"/>
<circle cx="26.7" cy="19.9" r="17" fill="url(#orb)"/>
<path d="M18 13.5 Q22 11 26 12.5 L25 19 Q21 17.5 17 19.5 Z" fill="#f2582a"/>
<path d="M27 12.5 Q31 14 35.5 12 L34.5 18.5 Q30.5 20.5 26 19 Z" fill="#86c23a"/>
<path d="M17 20.5 Q21 18.5 25 20 L24 26.5 Q20 25 16 27 Z" fill="#2aa3e6"/>
<path d="M26 20 Q30.5 21.5 34.5 19.5 L33.5 26 Q29.5 28 25 26.5 Z" fill="#ffc624"/>
<ellipse cx="26.7" cy="11.5" rx="13" ry="8" fill="url(#orbhi)"/>
<!-- folder -->
<path d="M74 10 L86 10 L89 13 L105 13 L105 34 L74 34 Z" fill="#e2bf5c"/>
<rect x="74.5" y="13.5" width="30" height="20.5" fill="url(#fold)"/>
<circle cx="78" cy="11" r="1.5" fill="#3aa040"/><circle cx="85" cy="12" r="1.5" fill="#d83a3a"/><circle cx="93" cy="14" r="1.5" fill="#3a7ad8"/>
<path d="M80 25 L99 25 L101 34 L97 34 L96 30 L83 30 L82 34 L78 34 Z" fill="#7cc0ea"/>
<!-- avast -->
<path d="M150 8 C155 8 159 11 160 14 C163 10 168 9 168 13 C168 16 164 18 162 19 C165 22 167 27 163 29 C160 31 157 27 155 26 C153 30 148 31 146 29 C143 32 137 33 136 29 C135 26 139 24 141 22 C137 20 133 16 136 13 C139 10 143 12 145 14 C145 10 147 8 150 8 Z" fill="#f57a1f"/>
<text x="151" y="25" font-family="Liberation Sans" font-weight="bold" font-size="17" fill="#fff" text-anchor="middle">a</text>
<!-- chrome -->
<circle cx="213" cy="19.9" r="15.5" fill="#db4437"/>
<path d="M213 19.9 L226.4 27.65 A15.5 15.5 0 0 1 199.6 27.65 Z" fill="#0f9d58"/>
<path d="M213 19.9 L199.6 27.65 A15.5 15.5 0 0 1 199.6 12.15 L213 12.15 Z" fill="#0f9d58"/>
<path d="M213 19.9 L213 12.15 L226.4 12.15 A15.5 15.5 0 0 1 213 35.4 Z" fill="#f4c20d"/>
<path d="M213 12.15 L226.4 12.15 A15.5 15.5 0 0 0 199.6 12.15 Z" fill="#db4437"/>
<circle cx="213" cy="19.9" r="7.2" fill="#fff"/>
<circle cx="213" cy="19.9" r="5.5" fill="#4285f4"/>
<!-- download arrows -->
<path d="M262 24 A13 13 0 0 1 282 8.5" stroke="#4fb6e8" stroke-width="3.5" fill="none"/>
<path d="M287 16 A13 13 0 0 1 267 31.5" stroke="#4fb6e8" stroke-width="3.5" fill="none"/>
<path d="M269 11 L280 11 L280 18 L285 18 L274.5 29 L264 18 L269 18 Z" fill="#6cbb2a" stroke="#4a8a1a" stroke-width="0.8"/>
<!-- winrar -->
<rect x="320" y="6" width="26" height="9" rx="2" fill="#b8243a"/>
<rect x="320" y="15.5" width="26" height="9" rx="2" fill="#3656b0"/>
<rect x="320" y="25" width="26" height="9" rx="2" fill="#2e8a3a"/>
<rect x="329" y="4" width="7" height="31" fill="#e8a850"/>
<circle cx="336" cy="10" r="4" fill="#f0b040"/>
<path d="M337 24 L346 24 L346 31 Q341.5 36 337 31 Z" fill="#f2d040" stroke="#fff" stroke-width="1"/>
<path d="M337 24 L341.5 24 L341.5 34 Q337 32 337 31 Z" fill="#4a90e0"/>
<!-- yandex button -->
<rect x="370" y="1.5" width="58.5" height="37" rx="3" fill="url(#btn)" stroke="#8ea8c4" stroke-width="1"/>
<circle cx="399.1" cy="19.2" r="14" fill="url(#ywh)"/>
<path d="M392 10.5 L399.1 20.5 L406.2 10.5" stroke="#e01400" stroke-width="3" fill="none"/>
<path d="M399.1 20 L399.1 29.5" stroke="#e01400" stroke-width="3"/>
<!-- lightning -->
<circle cx="460" cy="19.2" r="14.5" fill="#f4f8fd" stroke="#2b6cc4" stroke-width="2"/>
<path d="M463 7 L453 21 L459.5 21 L456 32 L467 16.5 L460.5 16.5 Z" fill="#1f62c4"/>
<!-- face -->
<path d="M508 9 Q512 4 522 7 Q530 6 537 10 L535 17 Q530 13 524 14 Q518 17 516 24 Q511 18 508 9 Z" fill="#140c0a"/>
<path d="M516 8 Q522 5 528 9" stroke="#5a1010" stroke-width="2" fill="none"/>
<ellipse cx="526" cy="22" rx="7.5" ry="9" fill="#e6b8a6"/>
<path d="M519 19 Q523 17 528 19" stroke="#6a3a30" stroke-width="1.2" fill="none"/>
<path d="M518 26 Q525 29 533 25" stroke="#b01818" stroke-width="2" fill="none"/>
<path d="M517 28 Q525 35 533 28 L532 33 Q525 37 518 33 Z" fill="#8a8a88"/>
<path d="M519 33 L527 36 L534 33 L532 37 L522 37 Z" fill="#201818"/>
<!-- ecuflash button -->
<rect x="556" y="1.5" width="58" height="37" rx="2" fill="url(#btn)" stroke="#8ea8c4" stroke-width="1"/>
<g transform="rotate(-30 585 19)">
<rect x="571" y="11" width="28" height="16" rx="2" fill="#9aa0a6"/>
<rect x="573" y="12.5" width="24" height="10" rx="1" fill="#3fd2e0"/>
<path d="M573 27 v4 M577 27 v4 M581 27 v4 M585 27 v4 M589 27 v4 M593 27 v4 M597 27 v4" stroke="#505860" stroke-width="2"/>
</g>
<!-- tray -->
<text x="1160.4" y="21" font-family="Liberation Sans" font-size="11.4" fill="#f4f8fc" text-anchor="middle">RU</text>
<path d="M1182.5 24 L1192 24 L1187.3 19 Z" fill="#f4f8fb"/>
<rect x="1205" y="15" width="10" height="14" rx="1.5" fill="#e8edf2" stroke="#4d5866" stroke-width="1"/>
<rect x="1211" y="12" width="7" height="8" fill="#f6f6f6" stroke="#4d5866" stroke-width="1"/>
<path d="M1229 26 h2 v-2 h-2 z M1232 26 h2 v-4 h-2 z M1235 26 h2 v-6 h-2 z M1238 26 h2 v-9 h-2 z M1241 26 h2 v-12 h-2 z" fill="#f2f6fa"/>
<path d="M1252 16 h4 l6 -5 v17 l-6 -5 h-4 z" fill="#eef2f6" stroke="#4d5866" stroke-width="0.8"/>
<path d="M1264 14 q3 5 0 10 M1266.5 12 q4.5 7 0 14" stroke="#eef2f6" stroke-width="1.3" fill="none"/>
<text x="1313" y="17.8" font-family="Liberation Sans" font-size="11.4" fill="#ffffff" text-anchor="middle">22:08</text>
<text x="1312.6" y="34" font-family="Liberation Sans" font-size="11.2" fill="#ffffff" text-anchor="middle">23.06.2019</text>
<rect x="1351.5" y="1" width="14.5" height="39" fill="#a8bcd2" opacity="0.6"/>
<rect x="1351" y="1" width="1" height="39" fill="#6e8299"/>
</svg>
</div></div></body></html>
